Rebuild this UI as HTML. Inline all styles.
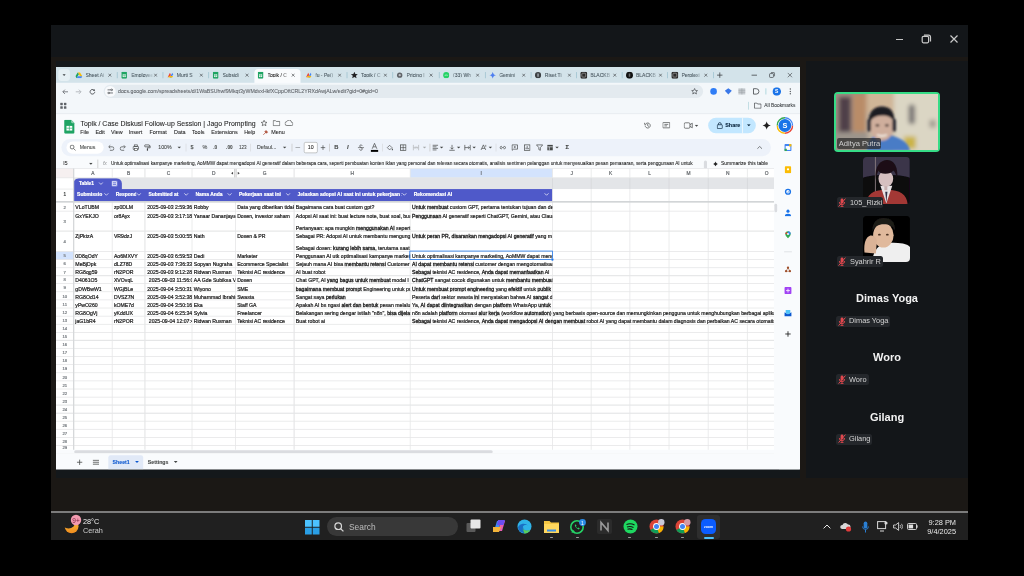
<!DOCTYPE html><html><head><meta charset="utf-8"><style>
*{box-sizing:border-box}
body>div:not(#br),body>svg{will-change:transform}
html,body{margin:0;padding:0}
body{width:1024px;height:576px;overflow:hidden;position:relative;background:#000;font-family:"Liberation Sans",sans-serif}
.a{position:absolute}
.t{position:absolute;white-space:nowrap;line-height:1}
#br{position:absolute;left:56.4px;top:67.4px;width:1920px;height:1038px;transform:scale(0.3875);transform-origin:0 0;background:#f9fbfd;overflow:hidden}
#br .t{color:#1f1f1f;-webkit-text-stroke:0.2px currentColor}
#br .c{-webkit-text-stroke:0.55px currentColor}
#br b{font-weight:normal;-webkit-text-stroke:0.8px currentColor}
</style></head><body>

<div class="a" style="left:51px;top:25px;width:917px;height:32.6px;background:#131619"></div>
<div class="a" style="left:51px;top:57px;width:917px;height:454px;background:#1b1815"></div>
<div class="a" style="left:806px;top:60.5px;width:162px;height:416.5px;background:#131619"></div>
<div class="a" style="left:56.4px;top:60.5px;width:743.5px;height:416.5px;background:#14181b"></div>
<div class="a" style="left:51px;top:511.2px;width:917px;height:1.8px;background:#7c7c7c"></div>
<div class="a" style="left:51px;top:513px;width:917px;height:27.2px;background:#202020"></div>
<div class="a" style="left:895.5px;top:38.5px;width:7.3px;height:1px;background:#c4c4c4"></div>
<svg class="a" style="left:921px;top:34px" width="11" height="10" viewBox="0 0 11 10"><rect x="1.2" y="2.4" width="6.4" height="6.4" rx="1.2" fill="none" stroke="#c9c9c9" stroke-width="1.2"/><path d="M3 1.2h4.5a2 2 0 0 1 2 2V7.6" fill="none" stroke="#c9c9c9" stroke-width="1.2"/></svg>
<svg class="a" style="left:949.5px;top:34.8px" width="8" height="8" viewBox="0 0 8 8"><path d="M0.5 0.5L7.5 7.5M7.5 0.5L0.5 7.5" stroke="#c9c9c9" stroke-width="1.2"/></svg>
<div id="br">
<div class="a" style="left:0px;top:0px;width:1920px;height:41px;background:#d3e3ea;"></div><div class="a" style="left:6px;top:6px;width:30px;height:30px;background:#e6f0f4;border-radius:8px"></div><svg class="a" style="left:14px;top:14px" width="14" height="14" viewBox="0 0 14 14"><path d="M3 5l4 4 4-4z" fill="#3c4043"/></svg><div class="a" style="left:512px;top:5px;width:119px;height:36px;background:#f9fbfd;border-radius:10px 10px 0 0"></div><svg class="a" style="left:50px;top:13px" width="18" height="16" viewBox="0 0 18 16"><path d="M6 1h6l6 10h-6z" fill="#fbbc04"/><path d="M6 1L0 11l3 5 6-10z" fill="#1ea362"/><path d="M3 16h12l3-5H6z" fill="#4688f4"/></svg><div class="t" style="left:76px;top:13.8px;width:58px;overflow:hidden;font-size:13px;color:#46545c;-webkit-mask-image:linear-gradient(90deg,#000 60%,transparent)">Sheet Ai</div><svg class="a" style="left:134px;top:16px" width="10" height="10" viewBox="0 0 10 10"><path d="M1 1l8 8M9 1L1 9" stroke="#3c4043" stroke-width="1.6"/></svg><svg class="a" style="left:168px;top:12px" width="16" height="18" viewBox="0 0 16 18"><rect x="1" y="0" width="14" height="18" rx="2" fill="#1fa463"/><rect x="4" y="7" width="8" height="7" fill="#fff"/><path d="M4 10.5h8M8 7v7" stroke="#1fa463" stroke-width="1.2"/></svg><div class="t" style="left:194px;top:13.8px;width:58px;overflow:hidden;font-size:13px;color:#46545c;-webkit-mask-image:linear-gradient(90deg,#000 60%,transparent)">Employee</div><svg class="a" style="left:252px;top:16px" width="10" height="10" viewBox="0 0 10 10"><path d="M1 1l8 8M9 1L1 9" stroke="#3c4043" stroke-width="1.6"/></svg><svg class="a" style="left:285.6px;top:13px" width="18" height="16" viewBox="0 0 18 16"><path d="M2 14l6-12 3 6z" fill="#ea4335"/><path d="M8 14l6-12 2 4-4 8z" fill="#4285f4"/><path d="M4 14h10l2-4H6z" fill="#fbbc04"/></svg><div class="t" style="left:311.6px;top:13.8px;width:58px;overflow:hidden;font-size:13px;color:#46545c;-webkit-mask-image:linear-gradient(90deg,#000 60%,transparent)">Murti S</div><svg class="a" style="left:369.6px;top:16px" width="10" height="10" viewBox="0 0 10 10"><path d="M1 1l8 8M9 1L1 9" stroke="#3c4043" stroke-width="1.6"/></svg><svg class="a" style="left:403.5px;top:12px" width="16" height="18" viewBox="0 0 16 18"><rect x="1" y="0" width="14" height="18" rx="2" fill="#1fa463"/><rect x="4" y="7" width="8" height="7" fill="#fff"/><path d="M4 10.5h8M8 7v7" stroke="#1fa463" stroke-width="1.2"/></svg><div class="t" style="left:429.5px;top:13.8px;width:58px;overflow:hidden;font-size:13px;color:#46545c;-webkit-mask-image:linear-gradient(90deg,#000 60%,transparent)">Subsidi</div><svg class="a" style="left:487.5px;top:16px" width="10" height="10" viewBox="0 0 10 10"><path d="M1 1l8 8M9 1L1 9" stroke="#3c4043" stroke-width="1.6"/></svg><svg class="a" style="left:519.5px;top:12px" width="16" height="18" viewBox="0 0 16 18"><rect x="1" y="0" width="14" height="18" rx="2" fill="#1fa463"/><rect x="4" y="7" width="8" height="7" fill="#fff"/><path d="M4 10.5h8M8 7v7" stroke="#1fa463" stroke-width="1.2"/></svg><div class="t" style="left:545.5px;top:13.8px;width:58px;overflow:hidden;font-size:13px;color:#1f1f1f;-webkit-mask-image:linear-gradient(90deg,#000 60%,transparent)">Topik / C</div><svg class="a" style="left:607px;top:16px" width="10" height="10" viewBox="0 0 10 10"><path d="M1 1l8 8M9 1L1 9" stroke="#3c4043" stroke-width="1.6"/></svg><svg class="a" style="left:643px;top:13px" width="18" height="16" viewBox="0 0 18 16"><path d="M2 14l6-12 3 6z" fill="#ea4335"/><path d="M8 14l6-12 2 4-4 8z" fill="#4285f4"/><path d="M4 14h10l2-4H6z" fill="#fbbc04"/></svg><div class="t" style="left:669px;top:13.8px;width:58px;overflow:hidden;font-size:13px;color:#46545c;-webkit-mask-image:linear-gradient(90deg,#000 60%,transparent)">fu - Pe(j</div><svg class="a" style="left:727px;top:16px" width="10" height="10" viewBox="0 0 10 10"><path d="M1 1l8 8M9 1L1 9" stroke="#3c4043" stroke-width="1.6"/></svg><svg class="a" style="left:761px;top:12px" width="18" height="18" viewBox="0 0 18 18"><path d="M9 0l2.6 6 6.4.4-5 4.1 1.7 6.5L9 13.5 3.3 17 5 10.5 0 6.4 6.4 6z" fill="#202124"/></svg><div class="t" style="left:787px;top:13.8px;width:58px;overflow:hidden;font-size:13px;color:#46545c;-webkit-mask-image:linear-gradient(90deg,#000 60%,transparent)">Topik / C</div><svg class="a" style="left:845px;top:16px" width="10" height="10" viewBox="0 0 10 10"><path d="M1 1l8 8M9 1L1 9" stroke="#3c4043" stroke-width="1.6"/></svg><svg class="a" style="left:878.6px;top:13px" width="16" height="16" viewBox="0 0 16 16"><circle cx="8" cy="8" r="7" fill="#5f6368"/><circle cx="8" cy="8" r="3" fill="#bdc1c6"/></svg><div class="t" style="left:904.6px;top:13.8px;width:58px;overflow:hidden;font-size:13px;color:#46545c;-webkit-mask-image:linear-gradient(90deg,#000 60%,transparent)">Pricing |</div><svg class="a" style="left:962.6px;top:16px" width="10" height="10" viewBox="0 0 10 10"><path d="M1 1l8 8M9 1L1 9" stroke="#3c4043" stroke-width="1.6"/></svg><svg class="a" style="left:998.6px;top:13px" width="16" height="16" viewBox="0 0 16 16"><circle cx="8" cy="8" r="8" fill="#25d366"/><path d="M4 8.5c2-1 6-1 8 0" stroke="#fff" stroke-width="1.5" fill="none"/></svg><div class="t" style="left:1024.6px;top:13.8px;width:58px;overflow:hidden;font-size:13px;color:#46545c;-webkit-mask-image:linear-gradient(90deg,#000 60%,transparent)">(33) Wh</div><svg class="a" style="left:1082.6px;top:16px" width="10" height="10" viewBox="0 0 10 10"><path d="M1 1l8 8M9 1L1 9" stroke="#3c4043" stroke-width="1.6"/></svg><svg class="a" style="left:1117.6px;top:12px" width="18" height="18" viewBox="0 0 18 18"><path d="M9 0C9.5 5 13 8.5 18 9 13 9.5 9.5 13 9 18 8.5 13 5 9.5 0 9 5 8.5 8.5 5 9 0z" fill="#4f7ff0"/></svg><div class="t" style="left:1143.6px;top:13.8px;width:58px;overflow:hidden;font-size:13px;color:#46545c;-webkit-mask-image:linear-gradient(90deg,#000 60%,transparent)">Gemini</div><svg class="a" style="left:1201.6px;top:16px" width="10" height="10" viewBox="0 0 10 10"><path d="M1 1l8 8M9 1L1 9" stroke="#3c4043" stroke-width="1.6"/></svg><svg class="a" style="left:1235.5px;top:13px" width="16" height="16" viewBox="0 0 16 16"><circle cx="8" cy="8" r="8" fill="#3c4043"/><path d="M6 4h4v8H6z" fill="#9aa0a6"/></svg><div class="t" style="left:1261.5px;top:13.8px;width:58px;overflow:hidden;font-size:13px;color:#46545c;-webkit-mask-image:linear-gradient(90deg,#000 60%,transparent)">Riset Ti</div><svg class="a" style="left:1319.5px;top:16px" width="10" height="10" viewBox="0 0 10 10"><path d="M1 1l8 8M9 1L1 9" stroke="#3c4043" stroke-width="1.6"/></svg><svg class="a" style="left:1352.5px;top:12px" width="18" height="18" viewBox="0 0 18 18"><rect x="0" y="0" width="18" height="18" rx="4" fill="#2b2b2b"/><rect x="4" y="4" width="10" height="10" rx="2" fill="none" stroke="#bbb" stroke-width="1.5"/></svg><div class="t" style="left:1378.5px;top:13.8px;width:58px;overflow:hidden;font-size:13px;color:#46545c;-webkit-mask-image:linear-gradient(90deg,#000 60%,transparent)">BLACKB</div><svg class="a" style="left:1436.5px;top:16px" width="10" height="10" viewBox="0 0 10 10"><path d="M1 1l8 8M9 1L1 9" stroke="#3c4043" stroke-width="1.6"/></svg><svg class="a" style="left:1470.6px;top:12px" width="18" height="18" viewBox="0 0 18 18"><circle cx="9" cy="9" r="9" fill="#111"/><path d="M7 5h4v8H7z" fill="#666"/></svg><div class="t" style="left:1496.6px;top:13.8px;width:58px;overflow:hidden;font-size:13px;color:#46545c;-webkit-mask-image:linear-gradient(90deg,#000 60%,transparent)">BLACKB</div><svg class="a" style="left:1554.6px;top:16px" width="10" height="10" viewBox="0 0 10 10"><path d="M1 1l8 8M9 1L1 9" stroke="#3c4043" stroke-width="1.6"/></svg><svg class="a" style="left:1588px;top:12px" width="18" height="18" viewBox="0 0 18 18"><rect x="0" y="0" width="18" height="18" rx="4" fill="#2b2b2b"/><rect x="4" y="4" width="10" height="10" rx="2" fill="none" stroke="#bbb" stroke-width="1.5"/></svg><div class="t" style="left:1614px;top:13.8px;width:58px;overflow:hidden;font-size:13px;color:#46545c;-webkit-mask-image:linear-gradient(90deg,#000 60%,transparent)">Perplexi</div><svg class="a" style="left:1672px;top:16px" width="10" height="10" viewBox="0 0 10 10"><path d="M1 1l8 8M9 1L1 9" stroke="#3c4043" stroke-width="1.6"/></svg><div class="a" style="left:157px;top:13px;width:2px;height:16px;background:#9fc3d0;"></div><div class="a" style="left:274.6px;top:13px;width:2px;height:16px;background:#9fc3d0;"></div><div class="a" style="left:392.5px;top:13px;width:2px;height:16px;background:#9fc3d0;"></div><div class="a" style="left:750px;top:13px;width:2px;height:16px;background:#9fc3d0;"></div><div class="a" style="left:867.6px;top:13px;width:2px;height:16px;background:#9fc3d0;"></div><div class="a" style="left:987.6px;top:13px;width:2px;height:16px;background:#9fc3d0;"></div><div class="a" style="left:1106.6px;top:13px;width:2px;height:16px;background:#9fc3d0;"></div><div class="a" style="left:1224.5px;top:13px;width:2px;height:16px;background:#9fc3d0;"></div><div class="a" style="left:1341.5px;top:13px;width:2px;height:16px;background:#9fc3d0;"></div><div class="a" style="left:1459.6px;top:13px;width:2px;height:16px;background:#9fc3d0;"></div><div class="a" style="left:1577px;top:13px;width:2px;height:16px;background:#9fc3d0;"></div><div class="a" style="left:1695.5px;top:13px;width:2px;height:16px;background:#9fc3d0;"></div><svg class="a" style="left:1705px;top:13px" width="16" height="16" viewBox="0 0 16 16"><path d="M8 1v14M1 8h14" stroke="#3c4043" stroke-width="2"/></svg><div class="a" style="left:1795px;top:20px;width:14px;height:1.6px;background:#3c4043;"></div><svg class="a" style="left:1840px;top:13px" width="16" height="16" viewBox="0 0 16 16"><rect x="1.5" y="4" width="10" height="10" rx="2" fill="none" stroke="#3c4043" stroke-width="1.8"/><path d="M5 1.5h7.5a2 2 0 0 1 2 2V11" fill="none" stroke="#3c4043" stroke-width="1.8"/></svg><svg class="a" style="left:1887px;top:14px" width="14" height="14" viewBox="0 0 14 14"><path d="M1 1l12 12M13 1L1 13" stroke="#3c4043" stroke-width="1.6"/></svg><div class="a" style="left:0px;top:41px;width:1920px;height:44px;background:#f3f7fa;"></div><div class="a" style="left:0px;top:85px;width:1920px;height:36px;background:#f3f7fa;"></div><div class="a" style="left:0px;top:120px;width:1920px;height:1.5px;background:#e0e5ea;"></div><svg class="a" style="left:15px;top:55px" width="18" height="18" viewBox="0 0 18 18"><path d="M16 9H3M8 3.5L2.5 9 8 14.5" stroke="#5f6368" stroke-width="2" fill="none"/></svg><svg class="a" style="left:49px;top:55px" width="18" height="18" viewBox="0 0 18 18"><path d="M2 9h13M10 3.5L15.5 9 10 14.5" stroke="#a6abb0" stroke-width="2" fill="none"/></svg><svg class="a" style="left:85px;top:55px" width="18" height="18" viewBox="0 0 18 18"><path d="M15 9a6 6 0 1 1-2-4.5" stroke="#3c4043" stroke-width="2" fill="none"/><path d="M15 2v5h-5z" fill="#3c4043"/></svg><div class="a" style="left:123px;top:46px;width:1547px;height:34px;background:#e3eaef;border-radius:17px"></div><div class="a" style="left:126px;top:49px;width:28px;height:28px;background:#f8fafc;border-radius:14px"></div><svg class="a" style="left:131px;top:54px" width="18" height="18" viewBox="0 0 18 18"><path d="M2 5h9M14 5h2M2 13h2M7 13h9" stroke="#3c4043" stroke-width="1.8"/><circle cx="12.5" cy="5" r="2" fill="none" stroke="#3c4043" stroke-width="1.6"/><circle cx="5.5" cy="13" r="2" fill="none" stroke="#3c4043" stroke-width="1.6"/></svg><div class="t" style="left:160px;top:55.575px;font-size:13.5px;color:#5f6368;font-weight:normal;">docs.google.com/spreadsheets/d/1WaBSUhwf9Mkqt3yWMdvxHkfXCppOftCRL2YRXdAwjALw/edit?gid=0#gid=0</div><svg class="a" style="left:1639px;top:54px" width="18" height="18" viewBox="0 0 18 18"><path d="M9 1.5l2.2 5 5.3.4-4 3.5 1.3 5.2L9 12.8l-4.8 2.8 1.3-5.2-4-3.5 5.3-.4z" fill="none" stroke="#3c4043" stroke-width="1.6"/></svg><svg class="a" style="left:1687px;top:53px" width="20" height="20" viewBox="0 0 20 20"><circle cx="10" cy="10" r="8.5" fill="#2f7df6"/></svg><svg class="a" style="left:1725px;top:54px" width="20" height="18" viewBox="0 0 20 18"><path d="M10 1l9 6-9 10L1 7z" fill="#3a78e8"/></svg><svg class="a" style="left:1760px;top:54px" width="20" height="18" viewBox="0 0 20 18"><rect x="1" y="1" width="18" height="16" fill="#c7ccd1"/><path d="M1 6h18M1 11h18M10 1v16" stroke="#8f959a" stroke-width="1.2"/></svg><svg class="a" style="left:1797px;top:53px" width="20" height="20" viewBox="0 0 20 20"><path d="M3 3h7a7 7 0 0 1 0 14H3z" fill="none" stroke="#3c4043" stroke-width="2"/></svg><div class="a" style="left:1831px;top:55px;width:2px;height:16px;background:#9fd0d8;"></div><svg class="a" style="left:1849px;top:52px" width="22" height="22" viewBox="0 0 22 22"><circle cx="11" cy="11" r="11" fill="#1a73e8"/><text x="11" y="15.5" font-size="13" font-weight="bold" text-anchor="middle" fill="#fff" font-family="Liberation Sans">S</text></svg><svg class="a" style="left:1892px;top:54px" width="6" height="18" viewBox="0 0 6 18"><circle cx="3" cy="3" r="2" fill="#5f6368"/><circle cx="3" cy="9" r="2" fill="#5f6368"/><circle cx="3" cy="15" r="2" fill="#5f6368"/></svg><svg class="a" style="left:10px;top:91px" width="18" height="18" viewBox="0 0 18 18"><rect x="1" y="1" width="6.5" height="6.5" rx="1" fill="#5f6368"/><rect x="10.5" y="1" width="6.5" height="6.5" rx="1" fill="#5f6368"/><rect x="1" y="10.5" width="6.5" height="6.5" rx="1" fill="#5f6368"/><rect x="10.5" y="10.5" width="6.5" height="6.5" rx="1" fill="#5f6368"/></svg><div class="a" style="left:1786px;top:90px;width:2px;height:20px;background:#b5d7de;"></div><svg class="a" style="left:1801px;top:91px" width="20" height="17" viewBox="0 0 20 17"><path d="M1.5 2h6l2 2.5h9v11h-17z" fill="none" stroke="#3c4043" stroke-width="1.8"/></svg><div class="t" style="left:1828px;top:93.125px;font-size:12.5px;color:#3c4043;font-weight:normal;">All Bookmarks</div>
<div class="a" style="left:0px;top:121.5px;width:1920px;height:920px;background:#f9fbfd;"></div><svg class="a" style="left:21px;top:136px" width="27" height="36" viewBox="0 0 27 36"><path d="M0 3a3 3 0 0 1 3-3h15l9 9v24a3 3 0 0 1-3 3H3a3 3 0 0 1-3-3z" fill="#1fa463"/><path d="M18 0l9 9h-6a3 3 0 0 1-3-3z" fill="#8ed1b1"/><rect x="6" y="16" width="15" height="12" fill="#fff"/><path d="M6 22h15M13.5 16v12" stroke="#1fa463" stroke-width="1.6"/></svg><div class="t" style="left:63px;top:138.655px;font-size:17.9px;color:#1f1f1f;font-weight:normal;">Topik / Case Diskusi Follow-up Session | Jago Prompting</div><svg class="a" style="left:528px;top:136px" width="18" height="18" viewBox="0 0 18 18"><path d="M9 1.5l2.2 5 5.3.4-4 3.5 1.3 5.2L9 12.8l-4.8 2.8 1.3-5.2-4-3.5 5.3-.4z" fill="none" stroke="#444746" stroke-width="1.7"/></svg><svg class="a" style="left:559px;top:137px" width="20" height="16" viewBox="0 0 20 16"><path d="M1.5 1.5h6l2 2h9v11h-17z" fill="none" stroke="#444746" stroke-width="1.7"/></svg><svg class="a" style="left:590px;top:137px" width="22" height="16" viewBox="0 0 22 16"><path d="M6 14a5 5 0 0 1-.5-10A6.5 6.5 0 0 1 18 6a4 4 0 0 1 0 8z" fill="none" stroke="#444746" stroke-width="1.7"/></svg><div class="t" style="left:62.5px;top:161.8px;font-size:14px;color:#1f1f1f;font-weight:normal;">File</div><div class="t" style="left:101.7px;top:161.8px;font-size:14px;color:#1f1f1f;font-weight:normal;">Edit</div><div class="t" style="left:141.7px;top:161.8px;font-size:14px;color:#1f1f1f;font-weight:normal;">View</div><div class="t" style="left:187.6px;top:161.8px;font-size:14px;color:#1f1f1f;font-weight:normal;">Insert</div><div class="t" style="left:241.3px;top:161.8px;font-size:14px;color:#1f1f1f;font-weight:normal;">Format</div><div class="t" style="left:304.8px;top:161.8px;font-size:14px;color:#1f1f1f;font-weight:normal;">Data</div><div class="t" style="left:350.7px;top:161.8px;font-size:14px;color:#1f1f1f;font-weight:normal;">Tools</div><div class="t" style="left:400.5px;top:161.8px;font-size:14px;color:#1f1f1f;font-weight:normal;">Extensions</div><div class="t" style="left:485.7px;top:161.8px;font-size:14px;color:#1f1f1f;font-weight:normal;">Help</div><svg class="a" style="left:532px;top:160px" width="18" height="18" viewBox="0 0 18 18"><path d="M3 15l7-7M10 4l4 4-3 3-4-4z" stroke="#b0533c" stroke-width="2" fill="#b0533c"/></svg><div class="t" style="left:555.6px;top:161.8px;font-size:14px;color:#1f1f1f;font-weight:normal;">Menu</div><svg class="a" style="left:1517px;top:141px" width="20" height="20" viewBox="0 0 20 20"><path d="M3.5 10a6.5 6.5 0 1 0 2-4.7" fill="none" stroke="#444746" stroke-width="1.8"/><path d="M2 3v4h4" fill="none" stroke="#444746" stroke-width="1.8"/><path d="M10 6v4.5l3 2" fill="none" stroke="#444746" stroke-width="1.8"/></svg><svg class="a" style="left:1565px;top:142px" width="20" height="18" viewBox="0 0 20 18"><rect x="1" y="1" width="18" height="14" rx="1" fill="none" stroke="#444746" stroke-width="1.8"/><path d="M5 6h10M5 10h7" stroke="#444746" stroke-width="1.8"/></svg><svg class="a" style="left:1620px;top:142px" width="24" height="18" viewBox="0 0 24 18"><rect x="1" y="2" width="15" height="14" rx="3" fill="none" stroke="#444746" stroke-width="1.8"/><path d="M16 7l6-4v12l-6-4" fill="none" stroke="#444746" stroke-width="1.8"/></svg><svg class="a" style="left:1648px;top:149px" width="10" height="6" viewBox="0 0 10 6"><path d="M0 0h10L5 5z" fill="#444746"/></svg><div class="a" style="left:1683px;top:131px;width:123px;height:40px;background:#c2e7ff;border-radius:20px"></div><div class="a" style="left:1771px;top:131px;width:1.5px;height:40px;background:#f9fbfd;"></div><svg class="a" style="left:1705px;top:142px" width="16" height="18" viewBox="0 0 16 18"><rect x="1.5" y="7" width="13" height="10" rx="1.5" fill="none" stroke="#001d35" stroke-width="1.8"/><path d="M4.5 7V5a3.5 3.5 0 0 1 7 0v2" fill="none" stroke="#001d35" stroke-width="1.8"/></svg><div class="t" style="left:1727px;top:143.3px;font-size:14px;color:#001d35;font-weight:bold;">Share</div><svg class="a" style="left:1783px;top:148px" width="10" height="6" viewBox="0 0 10 6"><path d="M0 0h10L5 5z" fill="#001d35"/></svg><svg class="a" style="left:1823px;top:140px" width="22" height="22" viewBox="0 0 22 22"><path d="M11 0C11.6 6 16 10.4 22 11 16 11.6 11.6 16 11 22 10.4 16 6 11.6 0 11 6 10.4 10.4 6 11 0z" fill="#1f1f1f"/></svg><svg class="a" style="left:1859px;top:129px" width="44" height="44" viewBox="0 0 44 44"><circle cx="22" cy="22" r="20" fill="none" stroke="#ea4335" stroke-width="3.5" stroke-dasharray="31.4 200"/><circle cx="22" cy="22" r="20" fill="none" stroke="#fbbc04" stroke-width="3.5" stroke-dasharray="0 31.4 31.4 200"/><circle cx="22" cy="22" r="20" fill="none" stroke="#34a853" stroke-width="3.5" stroke-dasharray="0 62.8 31.4 200"/><circle cx="22" cy="22" r="20" fill="none" stroke="#4285f4" stroke-width="3.5" stroke-dasharray="0 94.2 31.4 200"/><circle cx="22" cy="22" r="16.5" fill="#1a73e8"/><text x="22" y="29" font-size="19" font-weight="bold" text-anchor="middle" fill="#fff" font-family="Liberation Sans">S</text></svg><div class="a" style="left:0;top:2.6px;width:1920px;height:0"><div class="a" style="left:14px;top:183px;width:1831px;height:44px;background:#edf2fa;border-radius:22px"></div><div class="a" style="left:27px;top:189px;width:96px;height:32px;background:#ffffff;border-radius:16px"></div><svg class="a" style="left:35px;top:197px" width="17" height="17" viewBox="0 0 17 17"><circle cx="6.5" cy="6.5" r="5" fill="none" stroke="#444746" stroke-width="1.8"/><path d="M10.5 10.5l5 5" stroke="#444746" stroke-width="1.8"/></svg><div class="t" style="left:61px;top:197.575px;font-size:13.5px;color:#444746;font-weight:normal;">Menus</div><svg class="a" style="left:132.7px;top:196.0px" width="18" height="18" viewBox="0 0 18 18"><path d="M4 7h8a4.5 4.5 0 0 1 0 9H6" fill="none" stroke="#444746" stroke-width="1.8"/><path d="M7 3L3 7l4 4" fill="none" stroke="#444746" stroke-width="1.8"/></svg><svg class="a" style="left:163.6px;top:196.0px" width="18" height="18" viewBox="0 0 18 18"><path d="M14 7H6a4.5 4.5 0 0 0 0 9h6" fill="none" stroke="#444746" stroke-width="1.8"/><path d="M11 3l4 4-4 4" fill="none" stroke="#444746" stroke-width="1.8"/></svg><svg class="a" style="left:197.0px;top:196.0px" width="18" height="18" viewBox="0 0 18 18"><rect x="2" y="6" width="14" height="8" rx="1.5" fill="none" stroke="#444746" stroke-width="1.8"/><rect x="5" y="2" width="8" height="4" fill="none" stroke="#444746" stroke-width="1.6"/><rect x="5" y="11" width="8" height="5" fill="#fff" stroke="#444746" stroke-width="1.6"/></svg><svg class="a" style="left:227.0px;top:196.0px" width="18" height="18" viewBox="0 0 18 18"><rect x="2" y="2" width="12" height="5" rx="1" fill="none" stroke="#444746" stroke-width="1.8"/><path d="M14 4.5h2v5H9v3" fill="none" stroke="#444746" stroke-width="1.8"/><rect x="7.5" y="12" width="3" height="5" fill="#444746"/></svg><div class="t" style="left:264px;top:197.575px;font-size:13.5px;color:#444746;font-weight:normal;">100%</div><svg class="a" style="left:313px;top:202px" width="10" height="6" viewBox="0 0 10 6"><path d="M0 0h10L5 5z" fill="#444746"/></svg><div class="a" style="left:334.5px;top:195px;width:1.5px;height:20px;background:#c7c7c7;"></div><div class="a" style="left:501.5px;top:195px;width:1.5px;height:20px;background:#c7c7c7;"></div><div class="a" style="left:608px;top:195px;width:1.5px;height:20px;background:#c7c7c7;"></div><div class="a" style="left:705.3px;top:195px;width:1.5px;height:20px;background:#c7c7c7;"></div><div class="a" style="left:841.5px;top:195px;width:1.5px;height:20px;background:#c7c7c7;"></div><div class="a" style="left:964px;top:195px;width:1.5px;height:20px;background:#c7c7c7;"></div><div class="a" style="left:1134.5px;top:195px;width:1.5px;height:20px;background:#c7c7c7;"></div><div class="t" style="left:347px;top:197.3px;font-size:14px;color:#444746;font-weight:normal;">$</div><div class="t" style="left:378px;top:197.3px;font-size:14px;color:#444746;font-weight:normal;">%</div><div class="t" style="left:406px;top:198.4px;font-size:12px;color:#444746;font-weight:normal;font-weight:bold">.0</div><div class="t" style="left:439px;top:198.4px;font-size:12px;color:#444746;font-weight:normal;font-weight:bold">.00</div><div class="t" style="left:472px;top:198.4px;font-size:12px;color:#444746;font-weight:normal;">123</div><div class="t" style="left:518.5px;top:197.575px;font-size:13.5px;color:#444746;font-weight:normal;">Defaul...</div><svg class="a" style="left:585px;top:202px" width="10" height="6" viewBox="0 0 10 6"><path d="M0 0h10L5 5z" fill="#444746"/></svg><div class="a" style="left:618px;top:204px;width:12px;height:1.8px;background:#444746;"></div><div class="a" style="left:640px;top:191px;width:35px;height:28px;background:#ffffff;border:1.5px solid #747775;border-radius:4px"></div><div class="t" style="left:650px;top:197.575px;font-size:13.5px;color:#1f1f1f;font-weight:normal;">10</div><svg class="a" style="left:682px;top:198px" width="14" height="14" viewBox="0 0 14 14"><path d="M7 1v12M1 7h12" stroke="#444746" stroke-width="1.8"/></svg><div class="t" style="left:718px;top:196.75px;font-size:15px;color:#444746;font-weight:bold;">B</div><div class="t" style="left:751px;top:196.75px;font-size:15px;color:#444746;font-weight:bold;font-style:italic">I</div><svg class="a" style="left:778.4px;top:196.0px" width="18" height="18" viewBox="0 0 18 18"><path d="M1 9h16" stroke="#444746" stroke-width="1.6"/><path d="M12.5 4.5C12 3 10.5 2 9 2 7 2 5.5 3.3 5.5 5c0 4 7 3 7 7.5 0 1.7-1.5 3.5-3.5 3.5S5.5 15 5 13.5" fill="none" stroke="#444746" stroke-width="1.7"/></svg><svg class="a" style="left:812px;top:193px" width="20" height="24" viewBox="0 0 20 24"><path d="M4 15L10 1l6 14M6.5 10h7" fill="none" stroke="#444746" stroke-width="1.8"/><rect x="0" y="18" width="20" height="5" fill="#000"/></svg><svg class="a" style="left:852.4px;top:196.0px" width="18" height="18" viewBox="0 0 18 18"><path d="M3 9l6-6 6 6-6 6z" fill="none" stroke="#444746" stroke-width="1.7"/><path d="M16 11c1 1.5 1.5 2.5 1.5 3.3a1.5 1.5 0 0 1-3 0c0-.8.5-1.8 1.5-3.3z" fill="#444746"/></svg><svg class="a" style="left:886.5px;top:196.0px" width="18" height="18" viewBox="0 0 18 18"><rect x="2" y="2" width="14" height="14" fill="none" stroke="#444746" stroke-width="1.8"/><path d="M2 9h14M9 2v14" stroke="#444746" stroke-width="1.6"/></svg><svg class="a" style="left:920.3px;top:196.0px" width="18" height="18" viewBox="0 0 18 18"><path d="M2 2v14M16 2v14M5 9h8" stroke="#a8abad" stroke-width="1.8"/><path d="M7 6l-3 3 3 3M11 6l3 3-3 3" fill="none" stroke="#a8abad" stroke-width="1.6"/></svg><svg class="a" style="left:946px;top:202px" width="10" height="6" viewBox="0 0 10 6"><path d="M0 0h10L5 5z" fill="#a8abad"/></svg><svg class="a" style="left:969.5px;top:196.0px" width="18" height="18" viewBox="0 0 18 18"><path d="M2 3h14M2 7h10M2 11h14M2 15h10" stroke="#444746" stroke-width="1.8"/></svg><svg class="a" style="left:990px;top:202px" width="10" height="6" viewBox="0 0 10 6"><path d="M0 0h10L5 5z" fill="#444746"/></svg><svg class="a" style="left:1012.7px;top:196.0px" width="18" height="18" viewBox="0 0 18 18"><path d="M2 16h14M9 2v11M5 9l4 4 4-4" fill="none" stroke="#444746" stroke-width="1.8"/></svg><svg class="a" style="left:1034px;top:202px" width="10" height="6" viewBox="0 0 10 6"><path d="M0 0h10L5 5z" fill="#444746"/></svg><svg class="a" style="left:1052.7px;top:196.0px" width="18" height="18" viewBox="0 0 18 18"><path d="M2 2v14M16 2v14M2 9h12M11 6l3 3-3 3" fill="none" stroke="#444746" stroke-width="1.8"/></svg><svg class="a" style="left:1074px;top:202px" width="10" height="6" viewBox="0 0 10 6"><path d="M0 0h10L5 5z" fill="#444746"/></svg><svg class="a" style="left:1094.0px;top:196.0px" width="18" height="18" viewBox="0 0 18 18"><path d="M3 15L9 2l6 13M5 11h8" fill="none" stroke="#444746" stroke-width="1.8"/><path d="M15 2v5" stroke="#444746" stroke-width="1.6"/></svg><svg class="a" style="left:1116px;top:202px" width="10" height="6" viewBox="0 0 10 6"><path d="M0 0h10L5 5z" fill="#444746"/></svg><svg class="a" style="left:1143.5px;top:196.0px" width="18" height="18" viewBox="0 0 18 18"><path d="M7 6H5a3 3 0 0 0 0 6h2M11 6h2a3 3 0 0 1 0 6h-2M6 9h6" fill="none" stroke="#444746" stroke-width="1.8"/></svg><svg class="a" style="left:1175.3px;top:196.0px" width="18" height="18" viewBox="0 0 18 18"><path d="M2 2h14v11H6l-4 3z" fill="none" stroke="#444746" stroke-width="1.8"/><path d="M9 5v5M6.5 7.5h5" stroke="#444746" stroke-width="1.6"/></svg><svg class="a" style="left:1207.0px;top:196.0px" width="18" height="18" viewBox="0 0 18 18"><rect x="2" y="2" width="14" height="14" fill="none" stroke="#444746" stroke-width="1.8"/><path d="M6 13V9M9 13V5M12 13v-3" stroke="#444746" stroke-width="1.8"/></svg><svg class="a" style="left:1238.5px;top:196.0px" width="18" height="18" viewBox="0 0 18 18"><path d="M1 2h16l-6 7v7l-4-2V9z" fill="none" stroke="#444746" stroke-width="1.8"/></svg><svg class="a" style="left:1266.4px;top:196.0px" width="18" height="18" viewBox="0 0 18 18"><rect x="2" y="2" width="14" height="14" fill="#444746"/><path d="M2 7h14M7 7v9" stroke="#edf2fa" stroke-width="1.8"/></svg><svg class="a" style="left:1288px;top:202px" width="10" height="6" viewBox="0 0 10 6"><path d="M0 0h10L5 5z" fill="#444746"/></svg><div class="t" style="left:1315px;top:196.75px;font-size:15px;color:#444746;font-weight:bold;">Σ</div><svg class="a" style="left:1809px;top:200px" width="14" height="9" viewBox="0 0 14 9"><path d="M1 8l6-6 6 6" fill="none" stroke="#444746" stroke-width="1.8"/></svg></div><div class="a" style="left:0;top:2.6px;width:1920px;height:0"><div class="t" style="left:19px;top:239.85px;font-size:13px;color:#1f1f1f;font-weight:normal;">I5</div><svg class="a" style="left:85px;top:244px" width="10" height="6" viewBox="0 0 10 6"><path d="M0 0h10L5 5z" fill="#444746"/></svg><div class="a" style="left:107px;top:236px;width:1.5px;height:22px;background:#c7c7c7;"></div><div class="t" style="left:121px;top:239.85px;font-size:13px;color:#a0a3a6;font-weight:normal;font-style:italic">fx</div><div class="t" style="left:141.7px;top:240.2735px;font-size:12.23px;color:#1f1f1f;font-weight:normal;">Untuk optimalisasi kampanye marketing, AoMMW dapat mengadopsi AI generatif dalam beberapa cara, seperti pembuatan konten iklan yang personal dan relevan secara otomatis, analisis sentimen pelanggan untuk menyesuaikan pesan pemasaran, serta penggunaan AI untuk</div><div class="a" style="left:1672px;top:238px;width:8px;height:22px;background:#dadce0;border-radius:4px"></div><div class="a" style="left:1684px;top:234px;width:0px;height:0px;background:#fff;"></div><div class="a" style="left:1684px;top:232px;width:162px;height:30px;background:#f9fbfd;"></div><svg class="a" style="left:1695px;top:240px" width="14" height="14" viewBox="0 0 14 14"><path d="M7 0C7.4 3.7 10.3 6.6 14 7 10.3 7.4 7.4 10.3 7 14 6.6 10.3 3.7 7.4 0 7 3.7 6.6 6.6 3.7 7 0z" fill="#1f1f1f"/></svg><div class="t" style="left:1716px;top:239.85px;font-size:13px;color:#1f1f1f;font-weight:normal;">Summarize this table</div></div>
<div class="a" style="left:0.0px;top:261.94px;width:1852.65px;height:726.19px;background:#ffffff;"></div><div class="a" style="left:914.32px;top:261.94px;width:366.45px;height:23.74px;background:#d3e3fd;"></div><div class="a" style="left:0.0px;top:261.94px;width:45.42px;height:23.74px;background:#f6f0f0;"></div><div class="a" style="left:0.0px;top:475.87px;width:45.42px;height:20.88px;background:#d3e3fd;"></div><div class="a" style="left:45.42px;top:285.68px;width:1807.23px;height:29.68px;background:#e3e5e8;"></div><div class="a" style="left:45.42px;top:315.35px;width:1235.35px;height:30.19px;background:#4f59c9;"></div><div class="a" style="left:45.42px;top:286.71px;width:124.9px;height:31.23px;background:#4f59c9;border-radius:14px 14px 0 0"></div><div class="a" style="left:44.32px;top:261.94px;width:2.2px;height:23.74000000000001px;background:#e5e6e7;"></div><div class="a" style="left:44.32px;top:345.55px;width:2.2px;height:642.5799999999999px;background:#e5e6e7;"></div><div class="a" style="left:143.93px;top:261.94px;width:2.2px;height:23.74000000000001px;background:#e5e6e7;"></div><div class="a" style="left:143.93px;top:345.55px;width:2.2px;height:642.5799999999999px;background:#e5e6e7;"></div><div class="a" style="left:228.32px;top:261.94px;width:2.2px;height:23.74000000000001px;background:#e5e6e7;"></div><div class="a" style="left:228.32px;top:345.55px;width:2.2px;height:642.5799999999999px;background:#e5e6e7;"></div><div class="a" style="left:349.87px;top:261.94px;width:2.2px;height:23.74000000000001px;background:#e5e6e7;"></div><div class="a" style="left:349.87px;top:345.55px;width:2.2px;height:642.5799999999999px;background:#e5e6e7;"></div><div class="a" style="left:461.87px;top:261.94px;width:2.2px;height:23.74000000000001px;background:#e5e6e7;"></div><div class="a" style="left:461.87px;top:345.55px;width:2.2px;height:642.5799999999999px;background:#e5e6e7;"></div><div class="a" style="left:613.35px;top:261.94px;width:2.2px;height:23.74000000000001px;background:#e5e6e7;"></div><div class="a" style="left:613.35px;top:345.55px;width:2.2px;height:642.5799999999999px;background:#e5e6e7;"></div><div class="a" style="left:913.22px;top:261.94px;width:2.2px;height:23.74000000000001px;background:#e5e6e7;"></div><div class="a" style="left:913.22px;top:345.55px;width:2.2px;height:642.5799999999999px;background:#e5e6e7;"></div><div class="a" style="left:1279.67px;top:261.94px;width:2.2px;height:23.74000000000001px;background:#e5e6e7;"></div><div class="a" style="left:1279.67px;top:345.55px;width:2.2px;height:642.5799999999999px;background:#e5e6e7;"></div><div class="a" style="left:1279.67px;top:285.68px;width:2.2px;height:29.670000000000016px;background:#d5d7da;"></div><div class="a" style="left:1279.67px;top:315.35px;width:2.2px;height:30.19999999999999px;background:#e5e6e7;"></div><div class="a" style="left:1379.5500000000002px;top:261.94px;width:2.2px;height:23.74000000000001px;background:#e5e6e7;"></div><div class="a" style="left:1379.5500000000002px;top:345.55px;width:2.2px;height:642.5799999999999px;background:#e5e6e7;"></div><div class="a" style="left:1379.5500000000002px;top:285.68px;width:2.2px;height:29.670000000000016px;background:#d5d7da;"></div><div class="a" style="left:1379.5500000000002px;top:315.35px;width:2.2px;height:30.19999999999999px;background:#e5e6e7;"></div><div class="a" style="left:1480.19px;top:261.94px;width:2.2px;height:23.74000000000001px;background:#e5e6e7;"></div><div class="a" style="left:1480.19px;top:345.55px;width:2.2px;height:642.5799999999999px;background:#e5e6e7;"></div><div class="a" style="left:1480.19px;top:285.68px;width:2.2px;height:29.670000000000016px;background:#d5d7da;"></div><div class="a" style="left:1480.19px;top:315.35px;width:2.2px;height:30.19999999999999px;background:#e5e6e7;"></div><div class="a" style="left:1581.0900000000001px;top:261.94px;width:2.2px;height:23.74000000000001px;background:#e5e6e7;"></div><div class="a" style="left:1581.0900000000001px;top:345.55px;width:2.2px;height:642.5799999999999px;background:#e5e6e7;"></div><div class="a" style="left:1581.0900000000001px;top:285.68px;width:2.2px;height:29.670000000000016px;background:#d5d7da;"></div><div class="a" style="left:1581.0900000000001px;top:315.35px;width:2.2px;height:30.19999999999999px;background:#e5e6e7;"></div><div class="a" style="left:1681.74px;top:261.94px;width:2.2px;height:23.74000000000001px;background:#e5e6e7;"></div><div class="a" style="left:1681.74px;top:345.55px;width:2.2px;height:642.5799999999999px;background:#e5e6e7;"></div><div class="a" style="left:1681.74px;top:285.68px;width:2.2px;height:29.670000000000016px;background:#d5d7da;"></div><div class="a" style="left:1681.74px;top:315.35px;width:2.2px;height:30.19999999999999px;background:#e5e6e7;"></div><div class="a" style="left:1782.64px;top:261.94px;width:2.2px;height:23.74000000000001px;background:#e5e6e7;"></div><div class="a" style="left:1782.64px;top:345.55px;width:2.2px;height:642.5799999999999px;background:#e5e6e7;"></div><div class="a" style="left:1782.64px;top:285.68px;width:2.2px;height:29.670000000000016px;background:#d5d7da;"></div><div class="a" style="left:1782.64px;top:315.35px;width:2.2px;height:30.19999999999999px;background:#e5e6e7;"></div><div class="a" style="left:460.42px;top:261.94px;width:2px;height:23.74000000000001px;background:#c6c6c6;"></div><div class="a" style="left:463.77px;top:261.94px;width:2px;height:23.74000000000001px;background:#c6c6c6;"></div><svg class="a" style="left:450.97px;top:269.81px" width="8" height="8" viewBox="0 0 8 8"><path d="M6 0v8L1 4z" fill="#444"/></svg><svg class="a" style="left:466.71px;top:269.81px" width="8" height="8" viewBox="0 0 8 8"><path d="M2 0v8l5-4z" fill="#444"/></svg><div class="a" style="left:0px;top:284.68px;width:1852.65px;height:2.2px;background:#e5e6e7;"></div><div class="a" style="left:0px;top:260.94px;width:1852.65px;height:2px;background:#e5e7ea;"></div><div class="a" style="left:0px;top:370.77px;width:1852.65px;height:2.2px;background:#e5e6e7;"></div><div class="a" style="left:0px;top:422.38px;width:1852.65px;height:2.2px;background:#e5e6e7;"></div><div class="a" style="left:0px;top:474.77px;width:1852.65px;height:2.2px;background:#e5e6e7;"></div><div class="a" style="left:0px;top:495.65px;width:1852.65px;height:2.2px;background:#e5e6e7;"></div><div class="a" style="left:0px;top:516.53px;width:1852.65px;height:2.2px;background:#e5e6e7;"></div><div class="a" style="left:0px;top:537.4px;width:1852.65px;height:2.2px;background:#e5e6e7;"></div><div class="a" style="left:0px;top:558.28px;width:1852.65px;height:2.2px;background:#e5e6e7;"></div><div class="a" style="left:0px;top:579.16px;width:1852.65px;height:2.2px;background:#e5e6e7;"></div><div class="a" style="left:0px;top:600.04px;width:1852.65px;height:2.2px;background:#e5e6e7;"></div><div class="a" style="left:0px;top:620.91px;width:1852.65px;height:2.2px;background:#e5e6e7;"></div><div class="a" style="left:0px;top:641.79px;width:1852.65px;height:2.2px;background:#e5e6e7;"></div><div class="a" style="left:0px;top:662.67px;width:1852.65px;height:2.2px;background:#e5e6e7;"></div><div class="a" style="left:0px;top:683.55px;width:1852.65px;height:2.2px;background:#e5e6e7;"></div><div class="a" style="left:0px;top:704.42px;width:1852.65px;height:2.2px;background:#e5e6e7;"></div><div class="a" style="left:0px;top:725.3px;width:1852.65px;height:2.2px;background:#e5e6e7;"></div><div class="a" style="left:0px;top:746.18px;width:1852.65px;height:2.2px;background:#e5e6e7;"></div><div class="a" style="left:0px;top:767.05px;width:1852.65px;height:2.2px;background:#e5e6e7;"></div><div class="a" style="left:0px;top:787.93px;width:1852.65px;height:2.2px;background:#e5e6e7;"></div><div class="a" style="left:0px;top:808.81px;width:1852.65px;height:2.2px;background:#e5e6e7;"></div><div class="a" style="left:0px;top:829.6899999999999px;width:1852.65px;height:2.2px;background:#e5e6e7;"></div><div class="a" style="left:0px;top:850.56px;width:1852.65px;height:2.2px;background:#e5e6e7;"></div><div class="a" style="left:0px;top:871.4399999999999px;width:1852.65px;height:2.2px;background:#e5e6e7;"></div><div class="a" style="left:0px;top:892.3199999999999px;width:1852.65px;height:2.2px;background:#e5e6e7;"></div><div class="a" style="left:0px;top:913.1999999999999px;width:1852.65px;height:2.2px;background:#e5e6e7;"></div><div class="a" style="left:0px;top:934.0699999999999px;width:1852.65px;height:2.2px;background:#e5e6e7;"></div><div class="a" style="left:0px;top:954.9499999999999px;width:1852.65px;height:2.2px;background:#e5e6e7;"></div><div class="a" style="left:0px;top:975.8299999999999px;width:1852.65px;height:2.2px;background:#e5e6e7;"></div><div class="a" style="left:0px;top:996.7099999999999px;width:1852.65px;height:2.2px;background:#e5e6e7;"></div><div class="a" style="left:0px;top:314.35px;width:45.42px;height:2px;background:#e5e6e7;"></div><div class="a" style="left:0px;top:346.05px;width:1852.65px;height:4.159999999999968px;background:#cfd2d4;"></div><div class="a" style="left:44.22px;top:261.94px;width:2.4px;height:726.19px;background:#d6d8da;"></div><div class="a" style="left:45.42px;top:261.94px;width:99.61px;height:23.74px;overflow:hidden"><div class="t c" style="left:4.5px;right:4.5px;top:5px;font-size:12.5px;line-height:15.5px;color:#666a6e;font-weight:normal;text-align:center;">A</div></div><div class="a" style="left:145.03px;top:261.94px;width:84.39px;height:23.74px;overflow:hidden"><div class="t c" style="left:4.5px;right:4.5px;top:5px;font-size:12.5px;line-height:15.5px;color:#666a6e;font-weight:normal;text-align:center;">B</div></div><div class="a" style="left:229.42px;top:261.94px;width:121.55px;height:23.74px;overflow:hidden"><div class="t c" style="left:4.5px;right:4.5px;top:5px;font-size:12.5px;line-height:15.5px;color:#666a6e;font-weight:normal;text-align:center;">C</div></div><div class="a" style="left:350.97px;top:261.94px;width:112.0px;height:23.74px;overflow:hidden"><div class="t c" style="left:4.5px;right:4.5px;top:5px;font-size:12.5px;line-height:15.5px;color:#666a6e;font-weight:normal;text-align:center;">D</div></div><div class="a" style="left:462.97px;top:261.94px;width:151.48px;height:23.74px;overflow:hidden"><div class="t c" style="left:4.5px;right:4.5px;top:5px;font-size:12.5px;line-height:15.5px;color:#666a6e;font-weight:normal;text-align:center;">G</div></div><div class="a" style="left:614.45px;top:261.94px;width:299.87px;height:23.74px;overflow:hidden"><div class="t c" style="left:4.5px;right:4.5px;top:5px;font-size:12.5px;line-height:15.5px;color:#666a6e;font-weight:normal;text-align:center;">H</div></div><div class="a" style="left:914.32px;top:261.94px;width:366.45px;height:23.74px;overflow:hidden"><div class="t c" style="left:4.5px;right:4.5px;top:5px;font-size:12.5px;line-height:15.5px;color:#666a6e;font-weight:normal;text-align:center;">I</div></div><div class="a" style="left:1280.77px;top:261.94px;width:99.87px;height:23.74px;overflow:hidden"><div class="t c" style="left:4.5px;right:4.5px;top:5px;font-size:12.5px;line-height:15.5px;color:#666a6e;font-weight:normal;text-align:center;">J</div></div><div class="a" style="left:1380.65px;top:261.94px;width:100.65px;height:23.74px;overflow:hidden"><div class="t c" style="left:4.5px;right:4.5px;top:5px;font-size:12.5px;line-height:15.5px;color:#666a6e;font-weight:normal;text-align:center;">K</div></div><div class="a" style="left:1481.29px;top:261.94px;width:100.9px;height:23.74px;overflow:hidden"><div class="t c" style="left:4.5px;right:4.5px;top:5px;font-size:12.5px;line-height:15.5px;color:#666a6e;font-weight:normal;text-align:center;">L</div></div><div class="a" style="left:1582.19px;top:261.94px;width:100.65px;height:23.74px;overflow:hidden"><div class="t c" style="left:4.5px;right:4.5px;top:5px;font-size:12.5px;line-height:15.5px;color:#666a6e;font-weight:normal;text-align:center;">M</div></div><div class="a" style="left:1682.84px;top:261.94px;width:100.9px;height:23.74px;overflow:hidden"><div class="t c" style="left:4.5px;right:4.5px;top:5px;font-size:12.5px;line-height:15.5px;color:#666a6e;font-weight:normal;text-align:center;">N</div></div><div class="a" style="left:1783.74px;top:261.94px;width:100.9px;height:23.74px;overflow:hidden"><div class="t c" style="left:4.5px;right:4.5px;top:5px;font-size:12.5px;line-height:15.5px;color:#666a6e;font-weight:normal;text-align:center;">O</div></div><div class="a" style="left:0.0px;top:315.35px;width:45.42px;height:30.19px;overflow:hidden"><div class="t c" style="left:4.5px;right:4.5px;top:8px;font-size:12px;line-height:15.5px;color:#444746;font-weight:normal;text-align:center;">1</div></div><div class="a" style="left:0.0px;top:350.71px;width:45.42px;height:21.16px;overflow:hidden"><div class="t c" style="left:0px;right:0px;top:4.08px;font-size:11px;line-height:15.5px;color:#7a7f84;font-weight:normal;text-align:center;">2</div></div><div class="a" style="left:0.0px;top:371.87px;width:45.42px;height:51.61px;overflow:hidden"><div class="t c" style="left:0px;right:0px;top:19.31px;font-size:11px;line-height:15.5px;color:#7a7f84;font-weight:normal;text-align:center;">3</div></div><div class="a" style="left:0.0px;top:423.48px;width:45.42px;height:52.39px;overflow:hidden"><div class="t c" style="left:0px;right:0px;top:19.69px;font-size:11px;line-height:15.5px;color:#7a7f84;font-weight:normal;text-align:center;">4</div></div><div class="a" style="left:0.0px;top:475.87px;width:45.42px;height:20.88px;overflow:hidden"><div class="t c" style="left:0px;right:0px;top:3.94px;font-size:11px;line-height:15.5px;color:#7a7f84;font-weight:normal;text-align:center;">5</div></div><div class="a" style="left:0.0px;top:496.75px;width:45.42px;height:20.88px;overflow:hidden"><div class="t c" style="left:0px;right:0px;top:3.94px;font-size:11px;line-height:15.5px;color:#7a7f84;font-weight:normal;text-align:center;">6</div></div><div class="a" style="left:0.0px;top:517.63px;width:45.42px;height:20.88px;overflow:hidden"><div class="t c" style="left:0px;right:0px;top:3.94px;font-size:11px;line-height:15.5px;color:#7a7f84;font-weight:normal;text-align:center;">7</div></div><div class="a" style="left:0.0px;top:538.5px;width:45.42px;height:20.88px;overflow:hidden"><div class="t c" style="left:0px;right:0px;top:3.94px;font-size:11px;line-height:15.5px;color:#7a7f84;font-weight:normal;text-align:center;">8</div></div><div class="a" style="left:0.0px;top:559.38px;width:45.42px;height:20.88px;overflow:hidden"><div class="t c" style="left:0px;right:0px;top:3.94px;font-size:11px;line-height:15.5px;color:#7a7f84;font-weight:normal;text-align:center;">9</div></div><div class="a" style="left:0.0px;top:580.26px;width:45.42px;height:20.88px;overflow:hidden"><div class="t c" style="left:0px;right:0px;top:3.94px;font-size:11px;line-height:15.5px;color:#7a7f84;font-weight:normal;text-align:center;">10</div></div><div class="a" style="left:0.0px;top:601.14px;width:45.42px;height:20.88px;overflow:hidden"><div class="t c" style="left:0px;right:0px;top:3.94px;font-size:11px;line-height:15.5px;color:#7a7f84;font-weight:normal;text-align:center;">11</div></div><div class="a" style="left:0.0px;top:622.01px;width:45.42px;height:20.88px;overflow:hidden"><div class="t c" style="left:0px;right:0px;top:3.94px;font-size:11px;line-height:15.5px;color:#7a7f84;font-weight:normal;text-align:center;">12</div></div><div class="a" style="left:0.0px;top:642.89px;width:45.42px;height:20.88px;overflow:hidden"><div class="t c" style="left:0px;right:0px;top:3.94px;font-size:11px;line-height:15.5px;color:#7a7f84;font-weight:normal;text-align:center;">13</div></div><div class="a" style="left:0.0px;top:663.77px;width:45.42px;height:20.88px;overflow:hidden"><div class="t c" style="left:0px;right:0px;top:3.94px;font-size:11px;line-height:15.5px;color:#7a7f84;font-weight:normal;text-align:center;">14</div></div><div class="a" style="left:0.0px;top:684.65px;width:45.42px;height:20.88px;overflow:hidden"><div class="t c" style="left:0px;right:0px;top:3.94px;font-size:11px;line-height:15.5px;color:#7a7f84;font-weight:normal;text-align:center;">15</div></div><div class="a" style="left:0.0px;top:705.52px;width:45.42px;height:20.88px;overflow:hidden"><div class="t c" style="left:0px;right:0px;top:3.94px;font-size:11px;line-height:15.5px;color:#7a7f84;font-weight:normal;text-align:center;">16</div></div><div class="a" style="left:0.0px;top:726.4px;width:45.42px;height:20.88px;overflow:hidden"><div class="t c" style="left:0px;right:0px;top:3.94px;font-size:11px;line-height:15.5px;color:#7a7f84;font-weight:normal;text-align:center;">17</div></div><div class="a" style="left:0.0px;top:747.28px;width:45.42px;height:20.88px;overflow:hidden"><div class="t c" style="left:0px;right:0px;top:3.94px;font-size:11px;line-height:15.5px;color:#7a7f84;font-weight:normal;text-align:center;">18</div></div><div class="a" style="left:0.0px;top:768.15px;width:45.42px;height:20.88px;overflow:hidden"><div class="t c" style="left:0px;right:0px;top:3.94px;font-size:11px;line-height:15.5px;color:#7a7f84;font-weight:normal;text-align:center;">19</div></div><div class="a" style="left:0.0px;top:789.03px;width:45.42px;height:20.88px;overflow:hidden"><div class="t c" style="left:0px;right:0px;top:3.94px;font-size:11px;line-height:15.5px;color:#7a7f84;font-weight:normal;text-align:center;">20</div></div><div class="a" style="left:0.0px;top:809.91px;width:45.42px;height:20.88px;overflow:hidden"><div class="t c" style="left:0px;right:0px;top:3.94px;font-size:11px;line-height:15.5px;color:#7a7f84;font-weight:normal;text-align:center;">21</div></div><div class="a" style="left:0.0px;top:830.79px;width:45.42px;height:20.88px;overflow:hidden"><div class="t c" style="left:0px;right:0px;top:3.94px;font-size:11px;line-height:15.5px;color:#7a7f84;font-weight:normal;text-align:center;">22</div></div><div class="a" style="left:0.0px;top:851.66px;width:45.42px;height:20.88px;overflow:hidden"><div class="t c" style="left:0px;right:0px;top:3.94px;font-size:11px;line-height:15.5px;color:#7a7f84;font-weight:normal;text-align:center;">23</div></div><div class="a" style="left:0.0px;top:872.54px;width:45.42px;height:20.88px;overflow:hidden"><div class="t c" style="left:0px;right:0px;top:3.94px;font-size:11px;line-height:15.5px;color:#7a7f84;font-weight:normal;text-align:center;">24</div></div><div class="a" style="left:0.0px;top:893.42px;width:45.42px;height:20.88px;overflow:hidden"><div class="t c" style="left:0px;right:0px;top:3.94px;font-size:11px;line-height:15.5px;color:#7a7f84;font-weight:normal;text-align:center;">25</div></div><div class="a" style="left:0.0px;top:914.3px;width:45.42px;height:20.88px;overflow:hidden"><div class="t c" style="left:0px;right:0px;top:3.94px;font-size:11px;line-height:15.5px;color:#7a7f84;font-weight:normal;text-align:center;">26</div></div><div class="a" style="left:0.0px;top:935.17px;width:45.42px;height:20.88px;overflow:hidden"><div class="t c" style="left:0px;right:0px;top:3.94px;font-size:11px;line-height:15.5px;color:#7a7f84;font-weight:normal;text-align:center;">27</div></div><div class="a" style="left:0.0px;top:956.05px;width:45.42px;height:20.88px;overflow:hidden"><div class="t c" style="left:0px;right:0px;top:3.94px;font-size:11px;line-height:15.5px;color:#7a7f84;font-weight:normal;text-align:center;">28</div></div><div class="a" style="left:0.0px;top:976.93px;width:45.42px;height:11.2px;overflow:hidden"><div class="t c" style="left:0px;right:0px;top:-0.9px;font-size:11px;line-height:15.5px;color:#7a7f84;font-weight:normal;text-align:center;">29</div></div><div class="a" style="left:45.42px;top:285.68px;width:124.9px;height:29.68px;overflow:hidden"><div class="t c" style="left:14px;right:14px;top:8.5px;font-size:12.5px;line-height:15.5px;color:#ffffff;font-weight:bold;text-align:left;">Table1</div></div><svg class="a" style="left:109.39px;top:295.9px" width="14" height="10" viewBox="0 0 14 10"><path d="M2 2l5 5 5-5" fill="none" stroke="#fff" stroke-width="1.8"/></svg><svg class="a" style="left:142.23px;top:291.9px" width="18" height="18" viewBox="0 0 18 18"><rect x="1" y="1" width="16" height="16" rx="3" fill="#7d88dc"/><rect x="4" y="4" width="10" height="10" fill="none" stroke="#fff" stroke-width="1.6"/><path d="M4 8h10" stroke="#fff" stroke-width="1.6"/></svg><div class="a" style="left:45.42px;top:315.35px;width:99.61px;height:30.19px;overflow:hidden"><div class="t c" style="left:9px;right:9px;top:7px;font-size:12.8px;line-height:15.5px;color:#ffffff;font-weight:bold;text-align:left;right:22px;overflow:hidden">Submissio</div></div><svg class="a" style="left:123.03px;top:324.45px" width="14" height="10" viewBox="0 0 14 10"><path d="M2 2l5 5 5-5" fill="none" stroke="#fff" stroke-width="1.8"/></svg><div class="a" style="left:145.03px;top:315.35px;width:84.39px;height:30.19px;overflow:hidden"><div class="t c" style="left:9px;right:9px;top:7px;font-size:12.8px;line-height:15.5px;color:#ffffff;font-weight:bold;text-align:left;right:22px;overflow:hidden">Respond</div></div><svg class="a" style="left:207.42px;top:324.45px" width="14" height="10" viewBox="0 0 14 10"><path d="M2 2l5 5 5-5" fill="none" stroke="#fff" stroke-width="1.8"/></svg><div class="a" style="left:229.42px;top:315.35px;width:121.55px;height:30.19px;overflow:hidden"><div class="t c" style="left:9px;right:9px;top:7px;font-size:12.8px;line-height:15.5px;color:#ffffff;font-weight:bold;text-align:left;right:22px;overflow:hidden">Submitted at</div></div><svg class="a" style="left:328.97px;top:324.45px" width="14" height="10" viewBox="0 0 14 10"><path d="M2 2l5 5 5-5" fill="none" stroke="#fff" stroke-width="1.8"/></svg><div class="a" style="left:350.97px;top:315.35px;width:112.0px;height:30.19px;overflow:hidden"><div class="t c" style="left:9px;right:9px;top:7px;font-size:12.8px;line-height:15.5px;color:#ffffff;font-weight:bold;text-align:left;right:22px;overflow:hidden">Nama Anda</div></div><svg class="a" style="left:440.97px;top:324.45px" width="14" height="10" viewBox="0 0 14 10"><path d="M2 2l5 5 5-5" fill="none" stroke="#fff" stroke-width="1.8"/></svg><div class="a" style="left:462.97px;top:315.35px;width:151.48px;height:30.19px;overflow:hidden"><div class="t c" style="left:9px;right:9px;top:7px;font-size:12.8px;line-height:15.5px;color:#ffffff;font-weight:bold;text-align:left;right:22px;overflow:hidden">Pekerjaan saat ini</div></div><svg class="a" style="left:592.45px;top:324.45px" width="14" height="10" viewBox="0 0 14 10"><path d="M2 2l5 5 5-5" fill="none" stroke="#fff" stroke-width="1.8"/></svg><div class="a" style="left:614.45px;top:315.35px;width:299.87px;height:30.19px;overflow:hidden"><div class="t c" style="left:9px;right:9px;top:7px;font-size:12.8px;line-height:15.5px;color:#ffffff;font-weight:bold;text-align:left;right:22px;overflow:hidden">Jelaskan adopsi AI saat ini untuk pekerjaan :</div></div><svg class="a" style="left:892.32px;top:324.45px" width="14" height="10" viewBox="0 0 14 10"><path d="M2 2l5 5 5-5" fill="none" stroke="#fff" stroke-width="1.8"/></svg><div class="a" style="left:914.32px;top:315.35px;width:366.45px;height:30.19px;overflow:hidden"><div class="t c" style="left:9px;right:9px;top:7px;font-size:12.8px;line-height:15.5px;color:#ffffff;font-weight:bold;text-align:left;right:22px;overflow:hidden">Rekomendasi AI</div></div><svg class="a" style="left:1258.77px;top:324.45px" width="14" height="10" viewBox="0 0 14 10"><path d="M2 2l5 5 5-5" fill="none" stroke="#fff" stroke-width="1.8"/></svg><div class="a" style="left:45.42px;top:350.71px;width:99.61px;height:21.16px;overflow:hidden"><div class="t c" style="left:4.5px;right:4.5px;top:4px;font-size:13.3px;line-height:15.5px;color:#1f1f1f;font-weight:normal;text-align:left;">VLoTUBM</div></div><div class="a" style="left:145.03px;top:350.71px;width:84.39px;height:21.16px;overflow:hidden"><div class="t c" style="left:4.5px;right:4.5px;top:4px;font-size:13.3px;line-height:15.5px;color:#1f1f1f;font-weight:normal;text-align:left;">zp0DLM</div></div><div class="a" style="left:229.42px;top:350.71px;width:121.55px;height:21.16px;overflow:hidden"><div class="t c" style="left:6px;right:6px;top:4px;font-size:13.3px;line-height:15.5px;color:#1f1f1f;font-weight:normal;text-align:right;">2025-09-03 2:59:36</div></div><div class="a" style="left:350.97px;top:350.71px;width:112.0px;height:21.16px;overflow:hidden"><div class="t c" style="left:4.5px;right:4.5px;top:4px;font-size:13.3px;line-height:15.5px;color:#1f1f1f;font-weight:normal;text-align:left;">Robby</div></div><div class="a" style="left:462.97px;top:350.71px;width:151.48px;height:21.16px;overflow:hidden"><div class="t c" style="left:4.5px;right:4.5px;top:4px;font-size:13.3px;line-height:15.5px;color:#1f1f1f;font-weight:normal;text-align:left;">Data yang diberikan tidak lengkap</div></div><div class="a" style="left:614.45px;top:350.71px;width:299.87px;height:21.16px;overflow:hidden"><div class="t c" style="left:4.5px;right:4.5px;top:4px;font-size:13.3px;line-height:15.5px;color:#1f1f1f;font-weight:normal;text-align:left;">Bagaimana cara buat custom gpt?</div></div><div class="a" style="left:914.32px;top:350.71px;width:366.45px;height:21.16px;overflow:hidden"><div class="t c" style="left:4.5px;right:4.5px;top:4px;font-size:13.3px;line-height:15.5px;color:#1f1f1f;font-weight:normal;text-align:left;"><b>Untuk membuat</b> custom GPT, pertama tentukan tujuan dan desain</div></div><div class="a" style="left:45.42px;top:371.87px;width:99.61px;height:51.61px;overflow:hidden"><div class="t c" style="left:4.5px;right:4.5px;top:5.6px;font-size:13.3px;line-height:15.5px;color:#1f1f1f;font-weight:normal;text-align:left;">GxYEKJO</div></div><div class="a" style="left:145.03px;top:371.87px;width:84.39px;height:51.61px;overflow:hidden"><div class="t c" style="left:4.5px;right:4.5px;top:5.6px;font-size:13.3px;line-height:15.5px;color:#1f1f1f;font-weight:normal;text-align:left;">or8Ayx</div></div><div class="a" style="left:229.42px;top:371.87px;width:121.55px;height:51.61px;overflow:hidden"><div class="t c" style="left:6px;right:6px;top:5.6px;font-size:13.3px;line-height:15.5px;color:#1f1f1f;font-weight:normal;text-align:right;">2025-09-03 3:17:18</div></div><div class="a" style="left:350.97px;top:371.87px;width:112.0px;height:51.61px;overflow:hidden"><div class="t c" style="left:4.5px;right:4.5px;top:5.6px;font-size:13.3px;line-height:15.5px;color:#1f1f1f;font-weight:normal;text-align:left;">Yanaar Dananjaya</div></div><div class="a" style="left:462.97px;top:371.87px;width:151.48px;height:51.61px;overflow:hidden"><div class="t c" style="left:4.5px;right:4.5px;top:5.6px;font-size:13.3px;line-height:15.5px;color:#1f1f1f;font-weight:normal;text-align:left;">Dosen, investor saham</div></div><div class="a" style="left:614.45px;top:371.87px;width:299.87px;height:51.61px;overflow:hidden"><div class="t c" style="left:4.5px;right:4.5px;top:5.6px;font-size:13.3px;line-height:15.5px;color:#1f1f1f;font-weight:normal;text-align:left;">Adopsi AI saat ini: buat lecture note, buat soal, buat<br><br>Pertanyaan: apa mungkin <b>menggunakan AI</b> seperti</div></div><div class="a" style="left:914.32px;top:371.87px;width:366.45px;height:51.61px;overflow:hidden"><div class="t c" style="left:4.5px;right:4.5px;top:5.6px;font-size:13.3px;line-height:15.5px;color:#1f1f1f;font-weight:normal;text-align:left;"><b>Penggunaan</b> AI generatif seperti ChatGPT, Gemini, atau Claude</div></div><div class="a" style="left:45.42px;top:423.48px;width:99.61px;height:52.39px;overflow:hidden"><div class="t c" style="left:4.5px;right:4.5px;top:5.6px;font-size:13.3px;line-height:15.5px;color:#1f1f1f;font-weight:normal;text-align:left;">ZjPktzA</div></div><div class="a" style="left:145.03px;top:423.48px;width:84.39px;height:52.39px;overflow:hidden"><div class="t c" style="left:4.5px;right:4.5px;top:5.6px;font-size:13.3px;line-height:15.5px;color:#1f1f1f;font-weight:normal;text-align:left;">VR9dzJ</div></div><div class="a" style="left:229.42px;top:423.48px;width:121.55px;height:52.39px;overflow:hidden"><div class="t c" style="left:6px;right:6px;top:5.6px;font-size:13.3px;line-height:15.5px;color:#1f1f1f;font-weight:normal;text-align:right;">2025-09-03 5:00:55</div></div><div class="a" style="left:350.97px;top:423.48px;width:112.0px;height:52.39px;overflow:hidden"><div class="t c" style="left:4.5px;right:4.5px;top:5.6px;font-size:13.3px;line-height:15.5px;color:#1f1f1f;font-weight:normal;text-align:left;">Nath</div></div><div class="a" style="left:462.97px;top:423.48px;width:151.48px;height:52.39px;overflow:hidden"><div class="t c" style="left:4.5px;right:4.5px;top:5.6px;font-size:13.3px;line-height:15.5px;color:#1f1f1f;font-weight:normal;text-align:left;">Dosen &amp; PR</div></div><div class="a" style="left:614.45px;top:423.48px;width:299.87px;height:52.39px;overflow:hidden"><div class="t c" style="left:4.5px;right:4.5px;top:5.6px;font-size:13.3px;line-height:15.5px;color:#1f1f1f;font-weight:normal;text-align:left;">Sebagai PR: Adopsi AI untuk membantu mengunggah<br><br>Sebagai dosen: <b>kurang lebih sama</b>, terutama saat</div></div><div class="a" style="left:914.32px;top:423.48px;width:366.45px;height:52.39px;overflow:hidden"><div class="t c" style="left:4.5px;right:4.5px;top:5.6px;font-size:13.3px;line-height:15.5px;color:#1f1f1f;font-weight:normal;text-align:left;"><b>Untuk peran PR, disarankan mengadopsi</b> AI <b>generatif</b> yang m</div></div><div class="a" style="left:45.42px;top:475.87px;width:99.61px;height:20.88px;overflow:hidden"><div class="t c" style="left:4.5px;right:4.5px;top:5.6px;font-size:13.3px;line-height:15.5px;color:#1f1f1f;font-weight:normal;text-align:left;">0D8qOdY</div></div><div class="a" style="left:145.03px;top:475.87px;width:84.39px;height:20.88px;overflow:hidden"><div class="t c" style="left:4.5px;right:4.5px;top:5.6px;font-size:13.3px;line-height:15.5px;color:#1f1f1f;font-weight:normal;text-align:left;">Ao6MXVY</div></div><div class="a" style="left:229.42px;top:475.87px;width:121.55px;height:20.88px;overflow:hidden"><div class="t c" style="left:6px;right:6px;top:5.6px;font-size:13.3px;line-height:15.5px;color:#1f1f1f;font-weight:normal;text-align:right;">2025-09-03 6:59:53</div></div><div class="a" style="left:350.97px;top:475.87px;width:112.0px;height:20.88px;overflow:hidden"><div class="t c" style="left:4.5px;right:4.5px;top:5.6px;font-size:13.3px;line-height:15.5px;color:#1f1f1f;font-weight:normal;text-align:left;">Dedi</div></div><div class="a" style="left:462.97px;top:475.87px;width:151.48px;height:20.88px;overflow:hidden"><div class="t c" style="left:4.5px;right:4.5px;top:5.6px;font-size:13.3px;line-height:15.5px;color:#1f1f1f;font-weight:normal;text-align:left;">Marketer</div></div><div class="a" style="left:614.45px;top:475.87px;width:299.87px;height:20.88px;overflow:hidden"><div class="t c" style="left:4.5px;right:4.5px;top:5.6px;font-size:13.3px;line-height:15.5px;color:#1f1f1f;font-weight:normal;text-align:left;">Penggunaan AI utk optimalisasi kampanye marketing</div></div><div class="a" style="left:914.32px;top:475.87px;width:366.45px;height:20.88px;overflow:hidden"><div class="t c" style="left:4.5px;right:4.5px;top:5.6px;font-size:13.3px;line-height:15.5px;color:#1f1f1f;font-weight:normal;text-align:left;">Untuk optimalisasi kampanye marketing, AoMMW dapat mengadopsi</div></div><div class="a" style="left:45.42px;top:496.75px;width:99.61px;height:20.88px;overflow:hidden"><div class="t c" style="left:4.5px;right:4.5px;top:5.6px;font-size:13.3px;line-height:15.5px;color:#1f1f1f;font-weight:normal;text-align:left;">MeBjDpk</div></div><div class="a" style="left:145.03px;top:496.75px;width:84.39px;height:20.88px;overflow:hidden"><div class="t c" style="left:4.5px;right:4.5px;top:5.6px;font-size:13.3px;line-height:15.5px;color:#1f1f1f;font-weight:normal;text-align:left;">dLZ78D</div></div><div class="a" style="left:229.42px;top:496.75px;width:121.55px;height:20.88px;overflow:hidden"><div class="t c" style="left:6px;right:6px;top:5.6px;font-size:13.3px;line-height:15.5px;color:#1f1f1f;font-weight:normal;text-align:right;">2025-09-03 7:36:33</div></div><div class="a" style="left:350.97px;top:496.75px;width:112.0px;height:20.88px;overflow:hidden"><div class="t c" style="left:4.5px;right:4.5px;top:5.6px;font-size:13.3px;line-height:15.5px;color:#1f1f1f;font-weight:normal;text-align:left;">Sopyan Nugraha</div></div><div class="a" style="left:462.97px;top:496.75px;width:151.48px;height:20.88px;overflow:hidden"><div class="t c" style="left:4.5px;right:4.5px;top:5.6px;font-size:13.3px;line-height:15.5px;color:#1f1f1f;font-weight:normal;text-align:left;">Ecommerce Specialist</div></div><div class="a" style="left:614.45px;top:496.75px;width:299.87px;height:20.88px;overflow:hidden"><div class="t c" style="left:4.5px;right:4.5px;top:5.6px;font-size:13.3px;line-height:15.5px;color:#1f1f1f;font-weight:normal;text-align:left;">Sejauh mana AI bisa <b>membantu retensi</b> Customer</div></div><div class="a" style="left:914.32px;top:496.75px;width:366.45px;height:20.88px;overflow:hidden"><div class="t c" style="left:4.5px;right:4.5px;top:5.6px;font-size:13.3px;line-height:15.5px;color:#1f1f1f;font-weight:normal;text-align:left;"><b>AI dapat membantu retensi</b> customer dengan mengotomatisasi</div></div><div class="a" style="left:45.42px;top:517.63px;width:99.61px;height:20.88px;overflow:hidden"><div class="t c" style="left:4.5px;right:4.5px;top:5.6px;font-size:13.3px;line-height:15.5px;color:#1f1f1f;font-weight:normal;text-align:left;">RG8qg59</div></div><div class="a" style="left:145.03px;top:517.63px;width:84.39px;height:20.88px;overflow:hidden"><div class="t c" style="left:4.5px;right:4.5px;top:5.6px;font-size:13.3px;line-height:15.5px;color:#1f1f1f;font-weight:normal;text-align:left;">rN2POR</div></div><div class="a" style="left:229.42px;top:517.63px;width:121.55px;height:20.88px;overflow:hidden"><div class="t c" style="left:6px;right:6px;top:5.6px;font-size:13.3px;line-height:15.5px;color:#1f1f1f;font-weight:normal;text-align:right;">2025-09-03 9:12:28</div></div><div class="a" style="left:350.97px;top:517.63px;width:112.0px;height:20.88px;overflow:hidden"><div class="t c" style="left:4.5px;right:4.5px;top:5.6px;font-size:13.3px;line-height:15.5px;color:#1f1f1f;font-weight:normal;text-align:left;">Ridwan Rusman</div></div><div class="a" style="left:462.97px;top:517.63px;width:151.48px;height:20.88px;overflow:hidden"><div class="t c" style="left:4.5px;right:4.5px;top:5.6px;font-size:13.3px;line-height:15.5px;color:#1f1f1f;font-weight:normal;text-align:left;">Teknisi AC residence</div></div><div class="a" style="left:614.45px;top:517.63px;width:299.87px;height:20.88px;overflow:hidden"><div class="t c" style="left:4.5px;right:4.5px;top:5.6px;font-size:13.3px;line-height:15.5px;color:#1f1f1f;font-weight:normal;text-align:left;">AI buat robot</div></div><div class="a" style="left:914.32px;top:517.63px;width:366.45px;height:20.88px;overflow:hidden"><div class="t c" style="left:4.5px;right:4.5px;top:5.6px;font-size:13.3px;line-height:15.5px;color:#1f1f1f;font-weight:normal;text-align:left;"><b>Sebagai</b> teknisi AC residence, <b>Anda dapat memanfaatkan</b> AI</div></div><div class="a" style="left:45.42px;top:538.5px;width:99.61px;height:20.88px;overflow:hidden"><div class="t c" style="left:4.5px;right:4.5px;top:5.6px;font-size:13.3px;line-height:15.5px;color:#1f1f1f;font-weight:normal;text-align:left;">D4061O5</div></div><div class="a" style="left:145.03px;top:538.5px;width:84.39px;height:20.88px;overflow:hidden"><div class="t c" style="left:4.5px;right:4.5px;top:5.6px;font-size:13.3px;line-height:15.5px;color:#1f1f1f;font-weight:normal;text-align:left;">XVOvqL</div></div><div class="a" style="left:229.42px;top:538.5px;width:121.55px;height:20.88px;overflow:hidden"><div class="t c" style="left:10px;right:10px;top:5.6px;font-size:13.3px;line-height:15.5px;color:#1f1f1f;font-weight:normal;text-align:left;">2025-09-03 11:56:04</div></div><div class="a" style="left:350.97px;top:538.5px;width:112.0px;height:20.88px;overflow:hidden"><div class="t c" style="left:4.5px;right:4.5px;top:5.6px;font-size:13.3px;line-height:15.5px;color:#1f1f1f;font-weight:normal;text-align:left;">AA Gde Subiksa V</div></div><div class="a" style="left:462.97px;top:538.5px;width:151.48px;height:20.88px;overflow:hidden"><div class="t c" style="left:4.5px;right:4.5px;top:5.6px;font-size:13.3px;line-height:15.5px;color:#1f1f1f;font-weight:normal;text-align:left;">Dosen</div></div><div class="a" style="left:614.45px;top:538.5px;width:299.87px;height:20.88px;overflow:hidden"><div class="t c" style="left:4.5px;right:4.5px;top:5.6px;font-size:13.3px;line-height:15.5px;color:#1f1f1f;font-weight:normal;text-align:left;">Chat GPT, AI <b>yang bagus untuk membuat</b> modal l</div></div><div class="a" style="left:914.32px;top:538.5px;width:366.45px;height:20.88px;overflow:hidden"><div class="t c" style="left:4.5px;right:4.5px;top:5.6px;font-size:13.3px;line-height:15.5px;color:#1f1f1f;font-weight:normal;text-align:left;"><b>ChatGPT</b> sangat cocok digunakan untuk <b>membantu membuat</b></div></div><div class="a" style="left:45.42px;top:559.38px;width:99.61px;height:20.88px;overflow:hidden"><div class="t c" style="left:4.5px;right:4.5px;top:5.6px;font-size:13.3px;line-height:15.5px;color:#1f1f1f;font-weight:normal;text-align:left;">gDWBwW1</div></div><div class="a" style="left:145.03px;top:559.38px;width:84.39px;height:20.88px;overflow:hidden"><div class="t c" style="left:4.5px;right:4.5px;top:5.6px;font-size:13.3px;line-height:15.5px;color:#1f1f1f;font-weight:normal;text-align:left;">WGjBLe</div></div><div class="a" style="left:229.42px;top:559.38px;width:121.55px;height:20.88px;overflow:hidden"><div class="t c" style="left:6px;right:6px;top:5.6px;font-size:13.3px;line-height:15.5px;color:#1f1f1f;font-weight:normal;text-align:right;">2025-09-04 3:50:31</div></div><div class="a" style="left:350.97px;top:559.38px;width:112.0px;height:20.88px;overflow:hidden"><div class="t c" style="left:4.5px;right:4.5px;top:5.6px;font-size:13.3px;line-height:15.5px;color:#1f1f1f;font-weight:normal;text-align:left;">Wiyono</div></div><div class="a" style="left:462.97px;top:559.38px;width:151.48px;height:20.88px;overflow:hidden"><div class="t c" style="left:4.5px;right:4.5px;top:5.6px;font-size:13.3px;line-height:15.5px;color:#1f1f1f;font-weight:normal;text-align:left;">SME</div></div><div class="a" style="left:614.45px;top:559.38px;width:299.87px;height:20.88px;overflow:hidden"><div class="t c" style="left:4.5px;right:4.5px;top:5.6px;font-size:13.3px;line-height:15.5px;color:#1f1f1f;font-weight:normal;text-align:left;"><b>bagaimana membuat prompt</b> Engineering untuk publik</div></div><div class="a" style="left:914.32px;top:559.38px;width:366.45px;height:20.88px;overflow:hidden"><div class="t c" style="left:4.5px;right:4.5px;top:5.6px;font-size:13.3px;line-height:15.5px;color:#1f1f1f;font-weight:normal;text-align:left;"><b>Untuk membuat prompt engineering</b> yang <b>efektif</b> untuk <b>publik</b></div></div><div class="a" style="left:45.42px;top:580.26px;width:99.61px;height:20.88px;overflow:hidden"><div class="t c" style="left:4.5px;right:4.5px;top:5.6px;font-size:13.3px;line-height:15.5px;color:#1f1f1f;font-weight:normal;text-align:left;">RG8Od14</div></div><div class="a" style="left:145.03px;top:580.26px;width:84.39px;height:20.88px;overflow:hidden"><div class="t c" style="left:4.5px;right:4.5px;top:5.6px;font-size:13.3px;line-height:15.5px;color:#1f1f1f;font-weight:normal;text-align:left;">DVSZ7N</div></div><div class="a" style="left:229.42px;top:580.26px;width:121.55px;height:20.88px;overflow:hidden"><div class="t c" style="left:6px;right:6px;top:5.6px;font-size:13.3px;line-height:15.5px;color:#1f1f1f;font-weight:normal;text-align:right;">2025-09-04 3:52:38</div></div><div class="a" style="left:350.97px;top:580.26px;width:112.0px;height:20.88px;overflow:hidden"><div class="t c" style="left:4.5px;right:4.5px;top:5.6px;font-size:13.3px;line-height:15.5px;color:#1f1f1f;font-weight:normal;text-align:left;">Muhammad Ibrahim</div></div><div class="a" style="left:462.97px;top:580.26px;width:151.48px;height:20.88px;overflow:hidden"><div class="t c" style="left:4.5px;right:4.5px;top:5.6px;font-size:13.3px;line-height:15.5px;color:#1f1f1f;font-weight:normal;text-align:left;">Swasta</div></div><div class="a" style="left:614.45px;top:580.26px;width:299.87px;height:20.88px;overflow:hidden"><div class="t c" style="left:4.5px;right:4.5px;top:5.6px;font-size:13.3px;line-height:15.5px;color:#1f1f1f;font-weight:normal;text-align:left;">Sangat saya <b>perlukan</b></div></div><div class="a" style="left:914.32px;top:580.26px;width:366.45px;height:20.88px;overflow:hidden"><div class="t c" style="left:4.5px;right:4.5px;top:5.6px;font-size:13.3px;line-height:15.5px;color:#1f1f1f;font-weight:normal;text-align:left;">Peserta <b>dari</b> sektor swasta <b>ini</b> menyatakan bahwa AI <b>sangat</b> d</div></div><div class="a" style="left:45.42px;top:601.14px;width:99.61px;height:20.88px;overflow:hidden"><div class="t c" style="left:4.5px;right:4.5px;top:5.6px;font-size:13.3px;line-height:15.5px;color:#1f1f1f;font-weight:normal;text-align:left;">yPwO260</div></div><div class="a" style="left:145.03px;top:601.14px;width:84.39px;height:20.88px;overflow:hidden"><div class="t c" style="left:4.5px;right:4.5px;top:5.6px;font-size:13.3px;line-height:15.5px;color:#1f1f1f;font-weight:normal;text-align:left;">kOME7d</div></div><div class="a" style="left:229.42px;top:601.14px;width:121.55px;height:20.88px;overflow:hidden"><div class="t c" style="left:6px;right:6px;top:5.6px;font-size:13.3px;line-height:15.5px;color:#1f1f1f;font-weight:normal;text-align:right;">2025-09-04 3:50:16</div></div><div class="a" style="left:350.97px;top:601.14px;width:112.0px;height:20.88px;overflow:hidden"><div class="t c" style="left:4.5px;right:4.5px;top:5.6px;font-size:13.3px;line-height:15.5px;color:#1f1f1f;font-weight:normal;text-align:left;">Eka</div></div><div class="a" style="left:462.97px;top:601.14px;width:151.48px;height:20.88px;overflow:hidden"><div class="t c" style="left:4.5px;right:4.5px;top:5.6px;font-size:13.3px;line-height:15.5px;color:#1f1f1f;font-weight:normal;text-align:left;">Staff GA</div></div><div class="a" style="left:614.45px;top:601.14px;width:299.87px;height:20.88px;overflow:hidden"><div class="t c" style="left:4.5px;right:4.5px;top:5.6px;font-size:13.3px;line-height:15.5px;color:#1f1f1f;font-weight:normal;text-align:left;">Apakah AI bs ngasi <b>alert dan bentuk</b> pesan melalui</div></div><div class="a" style="left:914.32px;top:601.14px;width:366.45px;height:20.88px;overflow:hidden"><div class="t c" style="left:4.5px;right:4.5px;top:5.6px;font-size:13.3px;line-height:15.5px;color:#1f1f1f;font-weight:normal;text-align:left;">Ya, <b>AI dapat diintegrasikan</b> dengan <b>platform</b> WhatsApp <b>untuk</b></div></div><div class="a" style="left:45.42px;top:622.01px;width:99.61px;height:20.88px;overflow:hidden"><div class="t c" style="left:4.5px;right:4.5px;top:5.6px;font-size:13.3px;line-height:15.5px;color:#1f1f1f;font-weight:normal;text-align:left;">RG8OgVj</div></div><div class="a" style="left:145.03px;top:622.01px;width:84.39px;height:20.88px;overflow:hidden"><div class="t c" style="left:4.5px;right:4.5px;top:5.6px;font-size:13.3px;line-height:15.5px;color:#1f1f1f;font-weight:normal;text-align:left;">yKddUX</div></div><div class="a" style="left:229.42px;top:622.01px;width:121.55px;height:20.88px;overflow:hidden"><div class="t c" style="left:6px;right:6px;top:5.6px;font-size:13.3px;line-height:15.5px;color:#1f1f1f;font-weight:normal;text-align:right;">2025-09-04 6:25:34</div></div><div class="a" style="left:350.97px;top:622.01px;width:112.0px;height:20.88px;overflow:hidden"><div class="t c" style="left:4.5px;right:4.5px;top:5.6px;font-size:13.3px;line-height:15.5px;color:#1f1f1f;font-weight:normal;text-align:left;">Sylvia</div></div><div class="a" style="left:462.97px;top:622.01px;width:151.48px;height:20.88px;overflow:hidden"><div class="t c" style="left:4.5px;right:4.5px;top:5.6px;font-size:13.3px;line-height:15.5px;color:#1f1f1f;font-weight:normal;text-align:left;">Freelancer</div></div><div class="a" style="left:614.45px;top:622.01px;width:299.87px;height:20.88px;overflow:hidden"><div class="t c" style="left:4.5px;right:4.5px;top:5.6px;font-size:13.3px;line-height:15.5px;color:#1f1f1f;font-weight:normal;text-align:left;">Belakangan sering dengar istilah "n8n", <b>bisa dijelaskan</b></div></div><div class="a" style="left:914.32px;top:622.01px;width:938.32px;height:20.88px;overflow:hidden"><div class="t c" style="left:4.5px;right:4.5px;top:5.6px;font-size:13.3px;line-height:15.5px;color:#1f1f1f;font-weight:normal;text-align:left;">n8n adalah <b>platform</b> otomasi <b>alur kerja</b> (workflow <b>automation</b>) yang berbasis open-source dan memungkinkan pengguna untuk menghubungkan berbagai aplikasi</div></div><div class="a" style="left:45.42px;top:642.89px;width:99.61px;height:20.88px;overflow:hidden"><div class="t c" style="left:4.5px;right:4.5px;top:5.6px;font-size:13.3px;line-height:15.5px;color:#1f1f1f;font-weight:normal;text-align:left;">jaG1bR4</div></div><div class="a" style="left:145.03px;top:642.89px;width:84.39px;height:20.88px;overflow:hidden"><div class="t c" style="left:4.5px;right:4.5px;top:5.6px;font-size:13.3px;line-height:15.5px;color:#1f1f1f;font-weight:normal;text-align:left;">rN2POR</div></div><div class="a" style="left:229.42px;top:642.89px;width:121.55px;height:20.88px;overflow:hidden"><div class="t c" style="left:10px;right:10px;top:5.6px;font-size:13.3px;line-height:15.5px;color:#1f1f1f;font-weight:normal;text-align:left;">2025-09-04 12:07:41</div></div><div class="a" style="left:350.97px;top:642.89px;width:112.0px;height:20.88px;overflow:hidden"><div class="t c" style="left:4.5px;right:4.5px;top:5.6px;font-size:13.3px;line-height:15.5px;color:#1f1f1f;font-weight:normal;text-align:left;">Ridwan Rusman</div></div><div class="a" style="left:462.97px;top:642.89px;width:151.48px;height:20.88px;overflow:hidden"><div class="t c" style="left:4.5px;right:4.5px;top:5.6px;font-size:13.3px;line-height:15.5px;color:#1f1f1f;font-weight:normal;text-align:left;">Teknisi AC residence</div></div><div class="a" style="left:614.45px;top:642.89px;width:299.87px;height:20.88px;overflow:hidden"><div class="t c" style="left:4.5px;right:4.5px;top:5.6px;font-size:13.3px;line-height:15.5px;color:#1f1f1f;font-weight:normal;text-align:left;">Buat robot ai</div></div><div class="a" style="left:914.32px;top:642.89px;width:938.32px;height:20.88px;overflow:hidden"><div class="t c" style="left:4.5px;right:4.5px;top:5.6px;font-size:13.3px;line-height:15.5px;color:#1f1f1f;font-weight:normal;text-align:left;"><b>Sebagai</b> teknisi AC residence, <b>Anda dapat mengadopsi AI dengan membuat</b> robot AI yang dapat membantu dalam diagnosis dan perbaikan AC secara otomatis</div></div><div class="a" style="left:912.32px;top:473.87px;width:369.44999999999993px;height:23.879999999999995px;background:transparent;border:2.6px solid #1a73e8"></div><div class="a" style="left:1276.77px;top:492.75px;width:8px;height:8px;background:#1a73e8;border:1.5px solid #fff;border-radius:50%"></div><div class="a" style="left:1852.65px;top:261.94px;width:13.42px;height:726.19px;background:#f9fbfd;"></div><div class="a" style="left:1854.45px;top:352.52px;width:6.71px;height:22.45px;background:#dadce0;border-radius:4px"></div><div class="a" style="left:0.0px;top:988.13px;width:1852.65px;height:9.29px;background:#f9fbfd;"></div><div class="a" style="left:47.48px;top:989.42px;width:1080.0px;height:7.23px;background:#dadce0;border-radius:4px"></div><div class="a" style="left:0.0px;top:997.42px;width:1918.97px;height:41.55px;background:#f9fbfd;"></div><div class="a" style="left:53.42px;top:1012.39px;width:16px;height:16px;background:transparent;"></div><svg class="a" style="left:53.42px;top:1012.39px" width="16" height="16" viewBox="0 0 16 16"><path d="M8 1v14M1 8h14" stroke="#444746" stroke-width="2"/></svg><svg class="a" style="left:93.71px;top:1012.39px" width="18" height="16" viewBox="0 0 18 16"><path d="M1 3h16M1 8h16M1 13h16" stroke="#444746" stroke-width="2"/></svg><div class="a" style="left:135.23px;top:1002.32px;width:89.55px;height:36.65px;background:#e1e9f7;border-radius:6px 6px 0 0"></div><div class="t" style="left:146.06px;top:1012.965px;font-size:13.5px;color:#0b57d0;font-weight:bold;">Sheet1</div><svg class="a" style="left:204.29px;top:1017.39px" width="10" height="6" viewBox="0 0 10 6"><path d="M0 0h10L5 5z" fill="#0b57d0"/></svg><div class="t" style="left:236.9px;top:1012.965px;font-size:13.5px;color:#444746;font-weight:bold;">Settings</div><svg class="a" style="left:303.65px;top:1017.39px" width="10" height="6" viewBox="0 0 10 6"><path d="M0 0h10L5 5z" fill="#444746"/></svg><svg class="a" style="left:1884.58px;top:1003.29px" width="12" height="12" viewBox="0 0 12 12"><path d="M3 1v10l6-5z" fill="#80868b"/></svg><div class="a" style="left:1866.06px;top:182.19px;width:52.9px;height:856.77px;background:#f9fbfd;"></div><div class="a" style="left:0;top:2.6px;width:1920px;height:0"><svg class="a" style="left:1879.29px;top:195.42px" width="20" height="20" viewBox="0 0 20 20"><rect x="1" y="1" width="18" height="18" rx="2" fill="#4285f4"/><rect x="4" y="6" width="12" height="10" fill="#fff"/><rect x="13" y="1" width="6" height="6" fill="#fbbc04"/><rect x="1" y="13" width="6" height="6" fill="#34a853"/></svg><svg class="a" style="left:1879.29px;top:252.19px" width="20" height="20" viewBox="0 0 20 20"><rect x="2" y="1" width="16" height="18" rx="2" fill="#fbbc04"/><circle cx="10" cy="9" r="3" fill="#fff"/></svg><svg class="a" style="left:1879.29px;top:308.97px" width="20" height="20" viewBox="0 0 20 20"><circle cx="10" cy="10" r="8" fill="#1a73e8"/><circle cx="10" cy="10" r="4.5" fill="#fff"/><path d="M8 10l2 2 4-5" stroke="#1a73e8" stroke-width="1.6" fill="none"/></svg><svg class="a" style="left:1879.29px;top:363.16px" width="20" height="20" viewBox="0 0 20 20"><circle cx="10" cy="6" r="4" fill="#1a73e8"/><path d="M2 19a8 6 0 0 1 16 0z" fill="#1a73e8"/></svg><svg class="a" style="left:1879.29px;top:419.94px" width="20" height="20" viewBox="0 0 20 20"><path d="M10 1a7 7 0 0 1 7 7c0 5-7 11-7 11S3 13 3 8a7 7 0 0 1 7-7z" fill="#34a853"/><path d="M10 1a7 7 0 0 1 7 7l-7 3z" fill="#4285f4"/><path d="M3 8a7 7 0 0 1 3-5.5L10 8z" fill="#ea4335"/><circle cx="10" cy="8" r="2.5" fill="#fff"/></svg><div class="a" style="left:1879.29px;top:473.81px;width:20px;height:1.5px;background:#dadce0;"></div><svg class="a" style="left:1879.29px;top:510.26px" width="20" height="20" viewBox="0 0 20 20"><circle cx="10" cy="5" r="3" fill="#a0522d"/><circle cx="5" cy="14" r="3" fill="#a0522d"/><circle cx="15" cy="14" r="3" fill="#a0522d"/><path d="M10 5L5 14h10z" fill="none" stroke="#a0522d" stroke-width="1.5"/></svg><svg class="a" style="left:1879.29px;top:564.45px" width="20" height="20" viewBox="0 0 20 20"><rect x="1" y="1" width="18" height="18" rx="2" fill="#a142f4"/><path d="M5 10h10M10 5v10" stroke="#fff" stroke-width="2"/></svg><svg class="a" style="left:1879.29px;top:622.26px" width="20" height="20" viewBox="0 0 20 20"><path d="M1 8l9 5 9-5v10H1z" fill="#0b57d0"/><path d="M4 2h12v8l-6 3-6-3z" fill="#4fc3f7"/></svg><svg class="a" style="left:1879.29px;top:676.45px" width="20" height="20" viewBox="0 0 20 20"><path d="M10 3v14M3 10h14" stroke="#1f1f1f" stroke-width="2.2"/></svg></div>
</div>
<div class="a" style="left:833.9px;top:91.8px;width:105.8px;height:59.7px;border-radius:4px;background:#36dc86;overflow:hidden"><svg class="a" style="left:2px;top:2px" width="101.8" height="55.7" viewBox="0 0 102 56" preserveAspectRatio="none"><defs><filter id="fb" x="-20%" y="-20%" width="140%" height="140%"><feGaussianBlur stdDeviation="2.2"/></filter><filter id="fb2" x="-20%" y="-20%" width="140%" height="140%"><feGaussianBlur stdDeviation="1"/></filter></defs><rect width="102" height="56" fill="#d3cdbb"/><g filter="url(#fb)"><rect x="-5" y="-5" width="36" height="70" fill="#a08e84"/><rect x="2.8" y="2.8" width="12.2" height="35.5" fill="#503f4a"/><rect x="17" y="0" width="13.5" height="40" fill="#b98c68"/><rect x="30.5" y="-5" width="28" height="24" fill="#cfb597"/><rect x="30.5" y="19" width="28" height="30" fill="#c2b3a0"/><rect x="58" y="-5" width="49" height="70" fill="#dbd6c4"/><rect x="72.6" y="10.5" width="6.7" height="20" rx="3" fill="#7e7a78"/><rect x="93.7" y="26" width="6.3" height="7.8" fill="#a29c92"/><rect x="-5" y="38.3" width="37" height="25" fill="#9c948c"/><rect x="68" y="42.7" width="12" height="12.3" fill="#cbb446"/></g><g filter="url(#fb2)"><path d="M31 57c0-10 6-16.5 15-16.5s27 5 28 16.5z" fill="#4a7bc6"/><ellipse cx="46" cy="33" rx="11.5" ry="14" fill="#cfae9c"/><path d="M33 31c-1.5-13 5-18.5 13-18.5s13 4.5 12.5 17c-2-5.5-5-8-12.5-8s-11 3.5-13 9.5z" fill="#1d1a22"/><rect x="31.5" y="25" width="3.6" height="13" rx="1.8" fill="#2a2a34"/><rect x="56.5" y="25" width="3.6" height="13" rx="1.8" fill="#2a2a34"/><ellipse cx="41.5" cy="31.5" rx="2" ry="1.2" fill="#3a2a28"/><ellipse cx="51" cy="31.5" rx="2" ry="1.2" fill="#3a2a28"/><path d="M41 41q5 2.5 10 0" stroke="#efe8e0" stroke-width="1.8" fill="none"/></g></svg><div class="a" style="left:2.5px;top:45.8px;width:44px;height:11.2px;background:rgba(40,40,40,0.72);border-radius:2px"></div><div class="t" style="left:4.8px;top:47.6px;font-size:7.6px;color:#cfcfcf">Aditya Putra</div></div><div class="a" style="left:863.3px;top:157.3px;width:46.7px;height:46.5px;border-radius:4px;overflow:hidden;background:#1c1824"><svg width="46.7" height="46.5" viewBox="0 0 47 47" preserveAspectRatio="none"><defs><filter id="fr" x="-20%" y="-20%" width="140%" height="140%"><feGaussianBlur stdDeviation="0.7"/></filter></defs><g filter="url(#fr)"><rect width="47" height="47" fill="#0c0a0e"/><path d="M0 0h47v21C38 17 10 17 0 21z" fill="#3a3549"/><rect x="12" y="0" width="0.9" height="40" fill="#8a7c80"/><path d="M3 48c1-10 6-15 20.5-15S44 38 45 48z" fill="#a33836"/><path d="M17.5 29l6 18 6-18z" fill="#e8e2e4"/><path d="M22.4 35l1.1 11 1.1-11z" fill="#2f3048"/><ellipse cx="23" cy="22" rx="7.4" ry="8.2" fill="#d6c0c0"/><path d="M13 23c-2-14 5-20 11-20s12 5 10.5 20c-1-4-2-8-4-9-2 2-4 3-8 3s-6-1-7-3c-1 2-2 5-2.5 9z" fill="#1b1117"/><path d="M21.5 29.5h3v4h-3z" fill="#c8b0b0"/></g></svg></div><div class="a" style="left:836.7px;top:197.3px;width:45.8px;height:10.5px;background:#24272b;border-radius:2.5px"></div><svg class="a" style="left:838.3000000000001px;top:198.20000000000002px" width="8" height="9" viewBox="0 0 8 9"><rect x="2.6" y="0.6" width="2.8" height="5" rx="1.4" fill="#e0484e"/><path d="M1.3 4a2.7 2.7 0 0 0 5.4 0M4 6.8v1.8M2.5 8.6h3" fill="none" stroke="#e0484e" stroke-width="0.9"/><path d="M0.6 8.6L7.4 0.6" stroke="#e0484e" stroke-width="1"/></svg><div class="t" style="left:849.5px;top:199.10000000000002px;font-size:7.4px;color:#d4d4d4">105_Rizki</div><div class="a" style="left:863.3px;top:216.2px;width:46.7px;height:46.3px;border-radius:4px;overflow:hidden;background:#050505"><svg width="46.7" height="46.3" viewBox="0 0 47 47" preserveAspectRatio="none"><defs><filter id="fs" x="-20%" y="-20%" width="140%" height="140%"><feGaussianBlur stdDeviation="0.7"/></filter></defs><g filter="url(#fs)"><rect width="47" height="47" fill="#050505"/><path d="M9 48c1-11 5-18 13-20 7-1.5 12-1 18 0 5 1 8 3 8 6v14z" fill="#efefef"/><ellipse cx="20.5" cy="19.5" rx="10.3" ry="12.5" fill="#e0b99c"/><path d="M9.5 15c0-9 5-13 11.5-13s11.5 4 11 12c-2-3.5-5.5-5.5-11-5.5s-9.5 2.5-11.5 6.5z" fill="#1f1b19"/><path d="M1.5 37c-1-9 1.5-16 5.5-17 3-.6 6 1.5 7 4.5l-1 13.5z" fill="#dab397"/><ellipse cx="16.5" cy="19" rx="1.4" ry="0.9" fill="#4a3020"/><ellipse cx="24.5" cy="19" rx="1.4" ry="0.9" fill="#4a3020"/></g></svg></div><div class="a" style="left:836.7px;top:256.2px;width:45.8px;height:10.5px;background:#24272b;border-radius:2.5px"></div><svg class="a" style="left:838.3000000000001px;top:257.09999999999997px" width="8" height="9" viewBox="0 0 8 9"><rect x="2.6" y="0.6" width="2.8" height="5" rx="1.4" fill="#e0484e"/><path d="M1.3 4a2.7 2.7 0 0 0 5.4 0M4 6.8v1.8M2.5 8.6h3" fill="none" stroke="#e0484e" stroke-width="0.9"/><path d="M0.6 8.6L7.4 0.6" stroke="#e0484e" stroke-width="1"/></svg><div class="t" style="left:849.5px;top:258.0px;font-size:7.4px;color:#d4d4d4">Syahrir R</div><div class="t" style="left:806px;width:162px;text-align:center;top:293.4px;font-size:11px;font-weight:bold;color:#f2f2f2">Dimas Yoga</div><div class="t" style="left:806px;width:162px;text-align:center;top:352.29999999999995px;font-size:11px;font-weight:bold;color:#f2f2f2">Woro</div><div class="t" style="left:806px;width:162px;text-align:center;top:411.79999999999995px;font-size:11px;font-weight:bold;color:#f2f2f2">Gilang</div><div class="a" style="left:836.4px;top:315.6px;width:53.9px;height:10.5px;background:#24272b;border-radius:2.5px"></div><svg class="a" style="left:838.0px;top:316.5px" width="8" height="9" viewBox="0 0 8 9"><rect x="2.6" y="0.6" width="2.8" height="5" rx="1.4" fill="#e0484e"/><path d="M1.3 4a2.7 2.7 0 0 0 5.4 0M4 6.8v1.8M2.5 8.6h3" fill="none" stroke="#e0484e" stroke-width="0.9"/><path d="M0.6 8.6L7.4 0.6" stroke="#e0484e" stroke-width="1"/></svg><div class="t" style="left:849.1999999999999px;top:317.40000000000003px;font-size:7.4px;color:#d4d4d4">Dimas Yoga</div><div class="a" style="left:836.2px;top:374.2px;width:33.1px;height:10.5px;background:#24272b;border-radius:2.5px"></div><svg class="a" style="left:837.8000000000001px;top:375.09999999999997px" width="8" height="9" viewBox="0 0 8 9"><rect x="2.6" y="0.6" width="2.8" height="5" rx="1.4" fill="#e0484e"/><path d="M1.3 4a2.7 2.7 0 0 0 5.4 0M4 6.8v1.8M2.5 8.6h3" fill="none" stroke="#e0484e" stroke-width="0.9"/><path d="M0.6 8.6L7.4 0.6" stroke="#e0484e" stroke-width="1"/></svg><div class="t" style="left:849.0px;top:376.0px;font-size:7.4px;color:#d4d4d4">Woro</div><div class="a" style="left:836.2px;top:433.5px;width:35.8px;height:10.5px;background:#24272b;border-radius:2.5px"></div><svg class="a" style="left:837.8000000000001px;top:434.4px" width="8" height="9" viewBox="0 0 8 9"><rect x="2.6" y="0.6" width="2.8" height="5" rx="1.4" fill="#e0484e"/><path d="M1.3 4a2.7 2.7 0 0 0 5.4 0M4 6.8v1.8M2.5 8.6h3" fill="none" stroke="#e0484e" stroke-width="0.9"/><path d="M0.6 8.6L7.4 0.6" stroke="#e0484e" stroke-width="1"/></svg><div class="t" style="left:849.0px;top:435.3px;font-size:7.4px;color:#d4d4d4">Gilang</div>
<svg class="a" style="left:63px;top:514px" width="20" height="22" viewBox="0 0 20 22"><defs><mask id="mm"><rect width="20" height="22" fill="#fff"/><circle cx="5.5" cy="7.6" r="7" fill="#000"/></mask><linearGradient id="mg" x1="0" y1="0" x2="0" y2="1"><stop offset="0" stop-color="#f9c23c"/><stop offset="1" stop-color="#f08c1e"/></linearGradient></defs><circle cx="8.6" cy="12.3" r="6.9" fill="url(#mg)" mask="url(#mm)"/><circle cx="13" cy="6" r="5.2" fill="#f29bb0"/><text x="13" y="8.6" font-size="6.5" text-anchor="middle" fill="#7a1f3a" font-family="Liberation Sans">9+</text></svg><div class="t" style="left:83.2px;top:518.3px;font-size:7.3px;color:#f0f0f0">28°C</div><div class="t" style="left:83.2px;top:527.3px;font-size:7.3px;color:#cfcfcf">Cerah</div><svg class="a" style="left:305px;top:519.8px" width="14.5" height="14.5" viewBox="0 0 15 15"><rect x="0" y="0" width="7" height="7" fill="#4cc2ff"/><rect x="8" y="0" width="7" height="7" fill="#4cc2ff"/><rect x="0" y="8" width="7" height="7" fill="#2a9fe6"/><rect x="8" y="8" width="7" height="7" fill="#2a9fe6"/></svg><div class="a" style="left:327px;top:517.2px;width:130.8px;height:18.8px;border-radius:9.4px;background:#383838"></div><svg class="a" style="left:333.5px;top:521.8px" width="10" height="10" viewBox="0 0 10 10"><circle cx="4.2" cy="4.2" r="3.3" fill="none" stroke="#d8d8d8" stroke-width="1.2"/><path d="M6.6 6.6L9.4 9.4" stroke="#d8d8d8" stroke-width="1.3"/></svg><div class="t" style="left:349px;top:522.5px;font-size:8.4px;color:#bdbdbd">Search</div><svg class="a" style="left:466px;top:519px" width="15" height="14" viewBox="0 0 15 14"><rect x="0.5" y="4" width="9" height="9" rx="1" fill="#5a5a5a"/><rect x="4.5" y="0.5" width="10" height="9" rx="1" fill="#e8e8e8"/></svg><svg class="a" style="left:492px;top:519px" width="15" height="14" viewBox="0 0 15 14"><path d="M2 12L5 2h4l-3 10z" fill="#3c8df2"/><path d="M6 12l3-10h4l-3 10z" fill="#e85fb0"/><path d="M1 8h8l-2 5H1z" fill="#f3b439"/><path d="M6 1h7l-1.5 5H5z" fill="#6a4ef0"/></svg><svg class="a" style="left:517px;top:519px" width="15" height="15" viewBox="0 0 15 15"><circle cx="7.5" cy="7.5" r="7" fill="#2fb3e8"/><path d="M1 8a6.5 6.5 0 0 0 12 3c-3 1.5-7 .5-7-3 0-2 3-2.5 5-1.5A6.5 6.5 0 0 0 1 8z" fill="#1a6fc4"/><path d="M5 8c0 3 4 4 8 3-1 2-3 3.5-5.5 3.5" fill="#5ad05a"/></svg><svg class="a" style="left:544px;top:519.5px" width="15" height="13" viewBox="0 0 15 13"><path d="M0 1h5.5l1.5 1.5H15V12H0z" fill="#f4c542"/><rect x="0" y="4" width="15" height="9" fill="#ffd75e"/><rect x="3" y="9.5" width="9" height="2" fill="#3a8ee6"/></svg><svg class="a" style="left:570px;top:518.5px" width="16" height="15" viewBox="0 0 16 15"><circle cx="7" cy="8" r="6.2" fill="none" stroke="#25d366" stroke-width="1.6"/><path d="M1.5 14l1-3.5 2.5 2z" fill="#25d366"/><path d="M4.8 6.2c.5 2 2 3.6 4 4.2l1-1-1.5-.8-.6.6c-.8-.4-1.4-1-1.8-1.8l.6-.6-.8-1.5z" fill="#25d366"/><circle cx="12.5" cy="3.5" r="3.4" fill="#2a8ce8"/><text x="12.5" y="5.6" font-size="5" text-anchor="middle" fill="#fff" font-family="Liberation Sans">1</text></svg><svg class="a" style="left:596.5px;top:519px" width="15" height="15" viewBox="0 0 15 15"><rect x="0" y="0" width="15" height="15" rx="2" fill="#2b2b2b"/><path d="M4 11.5V3.5l7 8V3.5" fill="none" stroke="#9a9a9a" stroke-width="1.6"/></svg><svg class="a" style="left:622.5px;top:519px" width="15" height="15" viewBox="0 0 15 15"><circle cx="7.5" cy="7.5" r="7" fill="#1ed760"/><path d="M3.5 5.5c2.5-1 5.5-.8 8 .5M4 8c2-.7 4.5-.5 6.5.6M4.5 10.2c1.7-.5 3.5-.3 5 .4" stroke="#121212" stroke-width="1.1" fill="none"/></svg><svg class="a" style="left:648.5px;top:519px" width="16" height="15" viewBox="0 0 16 15"><circle cx="7.5" cy="7.5" r="7" fill="#db4437"/><path d="M7.5 7.5L1.4 11A7 7 0 0 0 10 14z" fill="#0f9d58"/><path d="M7.5 7.5L10 14A7 7 0 0 0 14.5 7.5z" fill="#f4b400"/><circle cx="7.5" cy="7.5" r="3.4" fill="#fff"/><circle cx="7.5" cy="7.5" r="2.5" fill="#4285f4"/><circle cx="12.3" cy="3.3" r="3.2" fill="#c9c9d8"/></svg><svg class="a" style="left:674.5px;top:519px" width="16" height="15" viewBox="0 0 16 15"><circle cx="7.5" cy="7.5" r="7" fill="#db4437"/><path d="M7.5 7.5L1.4 11A7 7 0 0 0 10 14z" fill="#0f9d58"/><path d="M7.5 7.5L10 14A7 7 0 0 0 14.5 7.5z" fill="#f4b400"/><circle cx="7.5" cy="7.5" r="3.4" fill="#fff"/><circle cx="7.5" cy="7.5" r="2.5" fill="#4285f4"/><circle cx="12.3" cy="3.3" r="3.2" fill="#d59aa5"/></svg><div class="a" style="left:697px;top:514.8px;width:23.4px;height:24.2px;border-radius:3px;background:#2e2e2e"></div><svg class="a" style="left:701px;top:519px" width="15" height="15" viewBox="0 0 15 15"><rect x="0" y="0" width="15" height="15" rx="4.5" fill="#0b5cff"/><text x="7.5" y="9" font-size="3.4" text-anchor="middle" fill="#fff" font-family="Liberation Sans" font-weight="bold">zoom</text></svg><div class="a" style="left:703.5px;top:536.6px;width:10px;height:1.6px;border-radius:1px;background:#4cc2ff"></div><div class="a" style="left:550.0px;top:537px;width:3px;height:1.4px;border-radius:1px;background:#9a9a9a"></div><div class="a" style="left:576.0px;top:537px;width:3px;height:1.4px;border-radius:1px;background:#9a9a9a"></div><div class="a" style="left:628.1px;top:537px;width:3px;height:1.4px;border-radius:1px;background:#9a9a9a"></div><div class="a" style="left:654.5px;top:537px;width:3px;height:1.4px;border-radius:1px;background:#9a9a9a"></div><div class="a" style="left:680.5px;top:537px;width:3px;height:1.4px;border-radius:1px;background:#9a9a9a"></div><svg class="a" style="left:822.5px;top:524px" width="8" height="5" viewBox="0 0 8 5"><path d="M0.6 4.4L4 1l3.4 3.4" fill="none" stroke="#e8e8e8" stroke-width="1"/></svg><svg class="a" style="left:840px;top:522px" width="12" height="10" viewBox="0 0 12 10"><path d="M2 7a2 2 0 0 1 .5-4A3 3 0 0 1 8 2.5 2.2 2.2 0 0 1 8.5 7z" fill="#d8d8d8"/><circle cx="8.5" cy="7" r="2.6" fill="#e03c3c"/></svg><svg class="a" style="left:861.5px;top:520.5px" width="7" height="12" viewBox="0 0 7 12"><rect x="1.7" y="0.5" width="3.6" height="7" rx="1.8" fill="#2a7fd4"/><path d="M0.6 5.5a2.9 2.9 0 0 0 5.8 0M3.5 8.5v3" fill="none" stroke="#2a7fd4" stroke-width="1"/></svg><svg class="a" style="left:877px;top:521px" width="11" height="11" viewBox="0 0 11 11"><rect x="0.6" y="0.6" width="8" height="7" fill="none" stroke="#d8d8d8" stroke-width="1"/><path d="M3 10h4" stroke="#d8d8d8"/><circle cx="9" cy="2" r="1.6" fill="#d8d8d8"/></svg><svg class="a" style="left:892.5px;top:522px" width="10" height="9" viewBox="0 0 10 9"><path d="M0.6 3h2l3-2.4v7.8l-3-2.4h-2z" fill="none" stroke="#d8d8d8" stroke-width="0.9"/><path d="M7 3a2 2 0 0 1 0 3M8.5 1.8a4 4 0 0 1 0 5.4" fill="none" stroke="#d8d8d8" stroke-width="0.8"/></svg><svg class="a" style="left:907px;top:523px" width="11" height="7" viewBox="0 0 11 7"><rect x="0.5" y="0.5" width="9" height="6" rx="1" fill="none" stroke="#e0e0e0" stroke-width="0.9"/><rect x="1.6" y="1.6" width="4.5" height="3.8" fill="#e0e0e0"/><rect x="9.6" y="2.3" width="1" height="2.4" fill="#e0e0e0"/></svg><div class="t" style="left:900px;width:56px;text-align:right;top:518.5px;font-size:7.4px;color:#e8e8e8">9:28 PM</div><div class="t" style="left:900px;width:56px;text-align:right;top:527.8px;font-size:7.4px;color:#e8e8e8">9/4/2025</div>
</body></html>
